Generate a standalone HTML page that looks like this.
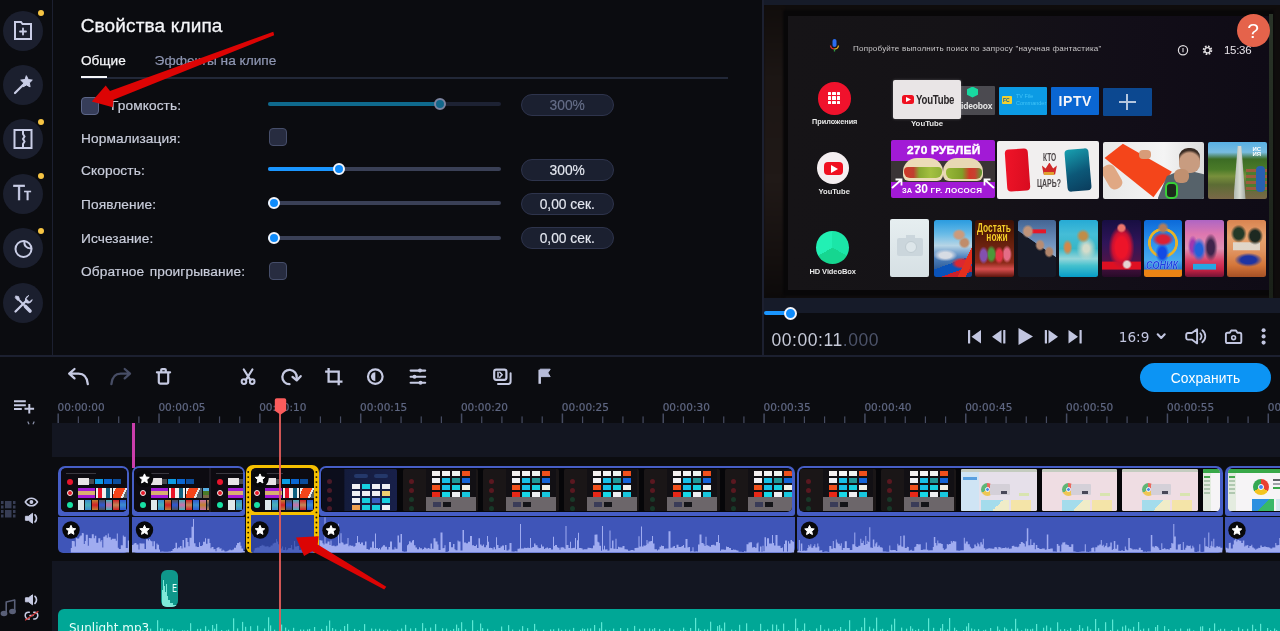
<!DOCTYPE html><html lang="ru"><head><meta charset="utf-8"><title>Свойства клипа</title><style>
*{margin:0;padding:0;box-sizing:border-box}
html,body{width:1280px;height:631px;overflow:hidden;background:#0b0c10;font-family:"Liberation Sans","DejaVu Sans",sans-serif;color:#d0d3e0}
.a{position:absolute}
#root{position:relative;width:1280px;height:631px;overflow:hidden;will-change:transform}
.circ{position:absolute;left:3px;width:40px;height:40px;border-radius:50%;background:#1b1f2e}
.dot{position:absolute;width:6px;height:6px;border-radius:50%;background:#f6c443}
.lbl{position:absolute;left:81px;font-size:13.7px;color:#c9cddb;white-space:nowrap;letter-spacing:.1px;word-spacing:1.500px;-webkit-text-stroke:.2px #c9cddb}
.cb{position:absolute;width:18px;height:18px;border-radius:4px;background:#272c40;border:1.5px solid #464e6a}
.track{position:absolute;left:268px;width:233px;height:4px;border-radius:2px;background:#3a4056}
.fill{position:absolute;left:268px;height:4px;border-radius:2px}
.knob{position:absolute;width:12px;height:12px;border-radius:50%;background:#0f8bfa;border:2px solid #f2f4fa}
.val{position:absolute;left:520.5px;width:93.5px;height:22.3px;border-radius:11.2px;background:#1b2030;border:1.5px solid #2e344c;font-size:13.8px;color:#e4e7f0;text-align:center;line-height:21.600px;-webkit-text-stroke:.15px currentColor}
.rl{position:absolute;top:401px;font-family:"DejaVu Sans","Liberation Sans",sans-serif;font-size:10.5px;color:#5f6782;white-space:nowrap;-webkit-text-stroke:.2px #5f6782}
.tvt{position:absolute;color:#e8e8e8;white-space:nowrap;font-family:"Liberation Sans",sans-serif}
</style></head><body><div id="root">
<div class="a" style="left:52px;top:0;width:1px;height:356px;background:#1c2030"></div>
<div class="circ" style="top:10.8px"></div>
<div class="circ" style="top:64.8px"></div>
<div class="circ" style="top:119px"></div>
<div class="circ" style="top:173.5px"></div>
<div class="circ" style="top:228.3px"></div>
<div class="circ" style="top:282.8px"></div>
<div class="dot" style="left:38px;top:10px"></div>
<div class="dot" style="left:38px;top:118.8px"></div>
<div class="dot" style="left:38px;top:173.2px"></div>
<div class="dot" style="left:38px;top:227.6px"></div>
<svg class="a" style="left:0;top:0" width="52" height="356" viewBox="0 0 52 356" fill="none" stroke="#c9cde6" stroke-width="2" stroke-linejoin="round" stroke-linecap="round">
<!-- folder plus -->
<path d="M15 39V22h6l1.5 2H31v15z" stroke-linejoin="miter"/>
<path d="M23 28.5v6M20 31.5h6" stroke-width="1.8"/>
<!-- wand -->
<path d="M15 93l8-8" stroke-width="2.2"/>
<path d="M26.5 76l1.8 3.6 4 .5-2.9 2.8.7 4-3.6-1.9-3.6 1.9.7-4-2.900-2.800 4-.5z" fill="#c9cde6" stroke-width="1"/>
<!-- transitions -->
<path d="M14.500 130h17v18h-17zM23 130v4l1.500 2.500-1.500 2.500 1.500 2.500-1.500 2.500V148" stroke-linejoin="miter"/>
<!-- sticker -->
<circle cx="23.500" cy="249" r="8"/>
<path d="M24.500 241.300c-.8 4.300 2.500 7.700 6.800 6.900" stroke-width="1.900"/>
<!-- tools -->
<path d="M17.500 298.500l7 7" stroke-width="1.800"/><path d="M25.500 306.500l4.500 4.500" stroke-width="3.600"/><path d="M16 296l2.600.6.700 2.400-1.600 1.300-2.300-2.200z" fill="#c9cde6" stroke-width=".8"/>
<path d="M15.500 311.500l10.800-10.800" stroke-width="2.300"/>
<path d="M28.300 295.800l-2.300 2.900 3.300 3.300 2.900-2.300a4.300 4.300 0 0 1-5.700 3.100a4.300 4.300 0 0 1 1.800-7z" fill="#c9cde6" stroke-width="1"/>
</svg>
<div class="a" style="left:12.500px;top:181.300px;font-size:21.5px;color:#c9cde6;letter-spacing:-1.200px;line-height:24px;-webkit-text-stroke:.45px #c9cde6;transform:scaleX(.92);transform-origin:0 50%">T<span style="font-size:17px;letter-spacing:0">т</span></div>
<div class="a" style="left:80.700px;top:14.100px;font-size:19px;color:#f4f5f8;white-space:nowrap;line-height:24px;letter-spacing:.15px;-webkit-text-stroke:.3px #f4f5f8">Свойства клипа</div>
<div class="a" style="left:81px;top:52.300px;font-size:13.6px;color:#f4f5f8;white-space:nowrap;line-height:18px;-webkit-text-stroke:.25px #f4f5f8">Общие</div>
<div class="a" style="left:154.600px;top:52.300px;font-size:13.7px;color:#8f97b3;white-space:nowrap;line-height:18px;-webkit-text-stroke:.2px #8f97b3">Эффекты на клипе</div>
<div class="a" style="left:81px;top:77px;width:647px;height:1.5px;background:#222838"></div>
<div class="a" style="left:81px;top:76px;width:26px;height:2px;background:#f4f5f8"></div>
<div class="lbl" style="left:111px;top:96.8px;line-height:18px">Громкость:</div>
<div class="lbl" style="left:81px;top:129.8px;line-height:18px">Нормализация:</div>
<div class="lbl" style="left:81px;top:161.8px;line-height:18px">Скорость:</div>
<div class="lbl" style="left:81px;top:195.8px;line-height:18px">Появление:</div>
<div class="lbl" style="left:81px;top:229.8px;line-height:18px">Исчезание:</div>
<div class="lbl" style="left:81px;top:262.8px;line-height:18px">Обратное проигрывание:</div>
<div class="cb" style="left:81px;top:96.500px;background:#363d59;border-color:#5d6789"></div>
<div class="cb" style="left:268.500px;top:128px"></div>
<div class="cb" style="left:268.500px;top:261.500px"></div>
<div class="track" style="top:102.3px;background:#1d2233"></div>
<div class="fill" style="top:102.3px;width:171.60000000000002px;background:#0f6a8d"></div>
<div class="knob" style="left:433.6px;top:98.3px;background:#12678a;border-color:#7b84a0"></div>
<div class="track" style="top:167px;background:#3a4056"></div>
<div class="fill" style="top:167px;width:70.80000000000001px;background:#1a96ff"></div>
<div class="knob" style="left:332.8px;top:163px"></div>
<div class="track" style="top:201px;background:#3a4056"></div>
<div class="fill" style="top:201px;width:6px;background:#1a96ff"></div>
<div class="knob" style="left:268px;top:197px"></div>
<div class="track" style="top:236px;background:#3a4056"></div>
<div class="fill" style="top:236px;width:6px;background:#1a96ff"></div>
<div class="knob" style="left:268px;top:232px"></div>
<div class="val" style="top:94px;color:#666e88;">300%</div>
<div class="val" style="top:159px;">300%</div>
<div class="val" style="top:193px;">0,00 сек.</div>
<div class="val" style="top:227px;">0,00 сек.</div>
<div class="a" style="left:0;top:355px;width:1280px;height:1.5px;background:#1c2030"></div>
<div class="a" style="left:762px;top:0;width:1.5px;height:356px;background:#1c2030"></div>
<div class="a" style="left:764px;top:0;width:516px;height:313px;background:#161b29"></div>
<div class="a" id="photo" style="left:764px;top:5px;width:516px;height:293px;background:#0f0c0c;overflow:hidden"><div class="a" style="left:0;top:0;width:21px;height:293px;background:linear-gradient(180deg,#110d0c 0,#1c1614 25%,#201917 60%,#15100f 85%,#0c0a0a 100%);filter:blur(1px)"></div>
<div class="a" style="left:18.5px;top:5.0px;width:491.0px;height:286.0px;background:#080708;border-radius:2px;filter:blur(1.2px)"></div>
<div class="a" style="left:23.5px;top:11.0px;width:481.5px;height:273.5px;background:linear-gradient(90deg,#161417 0%,#151317 35%,#120e18 70%,#0f0b16 100%);filter:blur(.7px)"></div>
<div class="a" style="left:505.0px;top:9.0px;width:4.0px;height:285.0px;background:linear-gradient(180deg,#2a3428,#1a2018);filter:blur(.7px)"></div>
<svg class="a" style="left:65px;top:33px;filter:blur(.4px)" width="11" height="16" viewBox="0 0 11 16"><rect x="3.5" y="1" width="4" height="8" rx="2" fill="#2a6cf0"/><path d="M1.5 7.500a4 4 0 0 0 4 3.500" stroke="#e03030" stroke-width="1.300" fill="none"/><path d="M9.500 7.500a4 4 0 0 1-4 3.500" stroke="#e8b020" stroke-width="1.300" fill="none"/><path d="M5.500 11v2.500" stroke="#30a040" stroke-width="1.300"/></svg>
<div class="tvt" style="left:89px;top:38px;font-size:8.05px;line-height:11px;color:#c8c6c8;filter:blur(.3px);letter-spacing:.19px">Попробуйте выполнить поиск по запросу "научная фантастика"</div>
<svg class="a" style="left:412px;top:38px" width="40" height="14" viewBox="0 0 40 14" fill="none" stroke="#e0dde0" stroke-width="1.200"><circle cx="7" cy="7.200" r="4.600"/><path d="M7 5v4.200" stroke-width="1.100"/><circle cx="31.500" cy="7.200" r="3.800" stroke-width="2" stroke-dasharray="1.700 1.280"/><circle cx="31.500" cy="7.200" r="2.600" stroke-width="1.300"/></svg>
<div class="tvt" style="left:460px;top:38px;font-size:11.5px;line-height:15px;color:#e6e2e8;letter-spacing:-.3px">15:36</div>
<div class="a" style="left:54.0px;top:77.0px;width:32.5px;height:32.5px;border-radius:50%;background:#f0122c"></div>
<div class="a" style="left:63.8px;top:86.8px;width:3.4px;height:3.4px;background:#fff;border-radius:.5px"></div>
<div class="a" style="left:63.8px;top:91.4px;width:3.4px;height:3.4px;background:#fff;border-radius:.5px"></div>
<div class="a" style="left:63.8px;top:96.0px;width:3.4px;height:3.4px;background:#fff;border-radius:.5px"></div>
<div class="a" style="left:68.4px;top:86.8px;width:3.4px;height:3.4px;background:#fff;border-radius:.5px"></div>
<div class="a" style="left:68.4px;top:91.4px;width:3.4px;height:3.4px;background:#fff;border-radius:.5px"></div>
<div class="a" style="left:68.4px;top:96.0px;width:3.4px;height:3.4px;background:#fff;border-radius:.5px"></div>
<div class="a" style="left:73.0px;top:86.8px;width:3.4px;height:3.4px;background:#fff;border-radius:.5px"></div>
<div class="a" style="left:73.0px;top:91.4px;width:3.4px;height:3.4px;background:#fff;border-radius:.5px"></div>
<div class="a" style="left:73.0px;top:96.0px;width:3.4px;height:3.4px;background:#fff;border-radius:.5px"></div>
<div class="tvt" style="left:48px;top:112px;font-size:7.3px;line-height:10px;font-weight:bold;filter:blur(.3px)">Приложения</div>
<div class="a" style="left:53.2px;top:147.0px;width:32.0px;height:32.0px;border-radius:50%;background:#f4eef0"></div>
<div class="a" style="left:60.0px;top:156.5px;width:18.5px;height:13.0px;border-radius:4px;background:#f01020"></div>
<svg class="a" style="left:66.5px;top:159.5px" width="7" height="8" viewBox="0 0 7 8"><path d="M0 0l7 4-7 4z" fill="#fff"/></svg>
<div class="tvt" style="left:54.5px;top:182px;font-size:7.6px;line-height:10px;font-weight:bold;filter:blur(.3px)">YouTube</div>
<div class="a" style="left:51.5px;top:226.0px;width:33.0px;height:33.0px;border-radius:50%;background:conic-gradient(from 0deg,#1be6a8 0 120deg,#16d690 120deg 240deg,#22f0b4 240deg 360deg)"></div>
<div class="tvt" style="left:45.5px;top:261.5px;font-size:7.5px;line-height:10px;font-weight:bold;filter:blur(.3px);letter-spacing:-.1px">HD VideoBox</div>
<div class="a" style="left:196.0px;top:81.0px;width:35.0px;height:28.5px;background:#4b4a50;border-radius:1px"></div>
<div class="a" style="left:203.0px;top:81.5px;width:11.0px;height:11.0px;background:#18d8a0;clip-path:polygon(50% 0,100% 25%,100% 75%,50% 100%,0 75%,0 25%)"></div>
<div class="tvt" style="left:197px;top:95.5px;font-size:8.5px;line-height:11px;font-weight:bold;filter:blur(.3px);letter-spacing:-.2px">ideobox</div>
<div class="a" style="left:128.5px;top:75.0px;width:68.0px;height:38.5px;background:#e9e5e6;border-radius:2px;box-shadow:0 0 3px rgba(255,255,255,.25)"></div>
<div class="a" style="left:138.0px;top:90.0px;width:12.0px;height:8.5px;background:#f01020;border-radius:2.500px"></div>
<svg class="a" style="left:142px;top:92px" width="5" height="5" viewBox="0 0 5 5"><path d="M0 0l5 2.500-5 2.500z" fill="#fff"/></svg>
<div class="tvt" style="left:152px;top:86.5px;font-size:13px;line-height:15px;font-weight:bold;color:#2a2628;transform:scaleX(.74);transform-origin:0 50%;letter-spacing:-.3px;filter:blur(.3px)">YouTube</div>
<div class="tvt" style="left:147px;top:114px;font-size:7.8px;line-height:10px;font-weight:bold;filter:blur(.3px)">YouTube</div>
<div class="a" style="left:234.5px;top:81.5px;width:48.5px;height:28.0px;background:#0c9be4;border-radius:1px"></div>
<div class="a" style="left:237.5px;top:90.5px;width:10.0px;height:8.5px;background:#f0d030;border-radius:1px"></div>
<div class="tvt" style="left:252px;top:88px;font-size:5.5px;line-height:6.5px;color:#40c4f8;filter:blur(.3px)">TV File<br>Commander</div>
<div class="tvt" style="left:239px;top:92px;font-size:5px;line-height:6px;color:#1060a0;font-weight:bold">FC</div>
<div class="a" style="left:286.5px;top:82.0px;width:48.5px;height:27.5px;background:#0a66d2;border-radius:1px"></div>
<div class="tvt" style="left:294.5px;top:87.5px;font-size:14px;line-height:17px;font-weight:bold;color:#f4f4f8;letter-spacing:.6px;filter:blur(.3px)">IPTV</div>
<div class="a" style="left:339.0px;top:83.0px;width:49.0px;height:27.5px;background:#0c4890;border-radius:1px"></div>
<div class="a" style="left:355.0px;top:96.0px;width:16.5px;height:1.7px;background:#b4c6de"></div>
<div class="a" style="left:362.4px;top:88.5px;width:1.7px;height:16.5px;background:#b4c6de"></div>
<div class="a" style="left:127.0px;top:135.0px;width:103.5px;height:57.5px;background:#a21ad6;border-radius:2px;overflow:hidden"><div class="a" style="left:0;top:21px;width:104px;height:21px;background:#3a3436"></div><div class="a" style="left:12px;top:18px;width:40px;height:23px;border-radius:14px 14px 6px 6px;background:#ecdcb8"></div><div class="a" style="left:52px;top:18px;width:40px;height:23px;border-radius:14px 14px 6px 6px;background:#e8d8b4"></div><div class="a" style="left:13px;top:27px;width:38px;height:11px;border-radius:4px 4px 6px 6px;background:linear-gradient(90deg,#d03828,#c04030 25%,#88a830 40%,#a4c040 70%,#90b038)"></div><div class="a" style="left:55px;top:28px;width:36px;height:11px;border-radius:4px 4px 6px 6px;background:linear-gradient(90deg,#98b838,#80a028 45%,#d03828 65%,#c84030 80%,#58a030)"></div><div class="tvt" style="left:15.500px;top:3px;font-size:11px;line-height:14px;font-weight:bold;color:#fff;letter-spacing:.2px;transform:scaleX(1.080);transform-origin:0 50%;-webkit-text-stroke:.4px #fff">270 РУБЛЕЙ</div><div class="tvt" style="left:11px;top:42px;font-size:9px;line-height:14px;font-weight:bold;color:#fff"><span style="font-size:7.500px">ЗА</span> <span style="font-size:12px">30</span> <span style="font-size:8px;letter-spacing:.35px">ГР. ЛОСОСЯ</span></div><svg class="a" style="left:0;top:36px" width="104" height="14" viewBox="0 0 104 14" fill="none" stroke="#fff" stroke-width="1.800"><path d="M1 12l9-8M4.500 3.500h6v6M103 12l-9-8M99.500 3.500h-6v6"/></svg></div>
<div class="a" style="left:233.4px;top:136.0px;width:101.5px;height:57.5px;background:#f1efef;border-radius:2px;overflow:hidden"><div class="a" style="left:9px;top:7.500px;width:22.500px;height:41.500px;border-radius:4px;background:linear-gradient(100deg,#f01428,#d80c20);transform:rotate(-4deg)"></div><div class="a" style="left:68.500px;top:8px;width:24px;height:41.500px;border-radius:4px;background:linear-gradient(160deg,#18a0b0,#0c5878 55%,#0a3c5c);transform:rotate(-5deg)"></div><div class="tvt" style="left:45.200px;top:9.500px;font-size:11px;line-height:12px;font-weight:bold;color:#4c4648;transform:scaleX(.6);transform-origin:0 50%">КТО</div><div class="tvt" style="left:39.500px;top:36px;font-size:11px;line-height:12px;font-weight:bold;color:#4c4648;transform:scaleX(.63);transform-origin:0 50%">ЦАРЬ?</div><div class="a" style="left:44.500px;top:21.500px;width:15px;height:12px;background:#d02828;clip-path:polygon(0 25%,25% 50%,50% 0,75% 50%,100% 25%,88% 100%,12% 100%)"></div><div class="a" style="left:47px;top:31px;width:10px;height:2.500px;background:#e0a030"></div></div>
<div class="a" style="left:338.5px;top:137.0px;width:101.5px;height:57.0px;background:linear-gradient(90deg,#e8e8e8,#f4f4f4 60%,#dcdcdc);border-radius:2px;overflow:hidden"><div class="a" style="left:0;top:0;width:102px;height:57px;background:#f4451a;clip-path:polygon(2% 28%,20% 3%,68% 52%,50% 97%)"></div><div class="a" style="left:2px;top:22px;width:14px;height:26px;border-radius:6px;background:#e0a884;transform:rotate(-30deg)"></div><div class="a" style="left:36px;top:8px;width:12px;height:9px;border-radius:4px;background:#d89c78"></div><div class="a" style="left:55px;top:24px;width:47px;height:33px;background:#56626a;clip-path:polygon(20% 30%,55% 10%,100% 25%,100% 100%,0 100%)"></div><div class="a" style="left:76px;top:6px;width:21px;height:25px;border-radius:9px;background:radial-gradient(circle at 50% 60%,#c89c80 0 55%,#3a2c24 70%)"></div><div class="a" style="left:71px;top:27px;width:15px;height:14px;border-radius:6px;background:#c09070"></div><div class="a" style="left:62px;top:40px;width:13px;height:17px;border-radius:5px;background:#1c2a1c;border:2px solid #38d038"></div></div>
<div class="a" style="left:443.5px;top:137.0px;width:59.5px;height:57.0px;background:linear-gradient(180deg,#58b0e4 0,#78bce0 18%,#3c6c24 30%,#4a7a28 48%,#78903c 60%,#5c6c34 75%,#7a6848 100%);border-radius:2px;overflow:hidden"><div class="a" style="left:26px;top:4px;width:12px;height:53px;background:linear-gradient(90deg,#b0b8b0,#d8dcd4,#9ca49c);clip-path:polygon(35% 0,65% 0,100% 100%,0 100%)"></div><div class="a" style="left:38px;top:27px;width:22px;height:22px;background:repeating-linear-gradient(180deg,#9c5c3c 0 3px,#4c7c30 3px 6px)"></div><div class="a" style="left:45px;top:5px;width:15px;height:10px;color:#fff;font-size:6px;line-height:5px;font-weight:bold">ИС<br>ИЯ</div><div class="a" style="left:48px;top:24px;width:9px;height:26px;border-radius:4px;background:#2860b0"></div></div>
<div class="a" style="left:126.2px;top:214.2px;width:39.2px;height:58.0px;background:linear-gradient(180deg,#e6eef0,#d6e0e4);border-radius:2px;overflow:hidden"><div class="a" style="left:7px;top:19px;width:26px;height:18px;border-radius:2px;background:#cbd6dc"></div><div class="a" style="left:15px;top:22px;width:12px;height:12px;border-radius:50%;background:#dde6ea;border:1.500px solid #c0ccd2"></div><div class="a" style="left:16px;top:16px;width:9px;height:4px;background:#cbd6dc"></div></div>
<div class="a" style="left:169.5px;top:215.0px;width:38.5px;height:56.5px;background:radial-gradient(ellipse 7px 6px at 66% 26%,#d4a88c 60%,transparent 100%),radial-gradient(ellipse 6px 6px at 80% 40%,#c89878 60%,transparent 100%),linear-gradient(115deg,transparent 0 78%,#e03828 78% 90%,transparent 90%),radial-gradient(ellipse 12px 6px at 30% 62%,#e8ecf4 50%,transparent 100%),radial-gradient(ellipse 11px 6px at 74% 76%,#d83038 55%,transparent 100%),linear-gradient(160deg,transparent 0 70%,#1458b8 70% 84%,#c82830 84% 92%,#20488c 92%),linear-gradient(180deg,#3aa4e4 0,#7cc8f0 25%,#c8e4f4 45%,#5c8cc4 65%,#204880 100%);border-radius:2.500px;filter:blur(.5px) saturate(1.150) brightness(.93)"></div>
<div class="a" style="left:211.3px;top:215.0px;width:38.5px;height:56.5px;background:radial-gradient(ellipse 5px 9px at 22% 62%,#8858b0 60%,transparent 100%),radial-gradient(ellipse 5px 9px at 42% 60%,#58a048 60%,transparent 100%),radial-gradient(ellipse 5px 9px at 62% 62%,#e04050 60%,transparent 100%),radial-gradient(ellipse 5px 9px at 82% 60%,#e87890 60%,transparent 100%),linear-gradient(180deg,#3c1408 0,#5c200c 30%,#702818 50%,#8c3020 75%,#d85858 86%,#5c1810 100%);border-radius:2.500px;filter:blur(.5px) saturate(1.150) brightness(.93)"></div>
<div class="a" style="left:253.6px;top:215.0px;width:38.5px;height:56.5px;background:radial-gradient(ellipse 6px 7px at 26% 20%,#c8a088 60%,transparent 100%),radial-gradient(ellipse 5px 6px at 58% 44%,#c09880 60%,transparent 100%),radial-gradient(ellipse 5px 6px at 82% 56%,#b89078 60%,transparent 100%),linear-gradient(180deg,transparent 0 16%,#e02030 17% 23%,transparent 24%) 55% 0/45% 100% no-repeat,linear-gradient(35deg,#181c28 0 55%,transparent 56%),linear-gradient(180deg,#4c6c98 0,#7c9cc4 40%,#a8bcd4 70%,#404858 100%);border-radius:2.500px;filter:blur(.5px) saturate(1.150) brightness(.93)"></div>
<div class="a" style="left:295.4px;top:215.0px;width:38.5px;height:56.5px;background:radial-gradient(ellipse 7px 7px at 62% 28%,#c89858 50%,transparent 100%),radial-gradient(ellipse 5px 8px at 22% 48%,#d8945c 50%,transparent 100%),radial-gradient(ellipse 10px 12px at 70% 50%,#e4ecdc 30%,transparent 100%),linear-gradient(180deg,#38b4dc 0,#58c8e0 25%,#48c0d0 50%,#a8e4e8 68%,#58ccd8 80%,#18a4cc 100%);border-radius:2.500px;filter:blur(.5px) saturate(1.150) brightness(.93)"></div>
<div class="a" style="left:338.0px;top:215.0px;width:38.5px;height:56.5px;background:radial-gradient(ellipse 5px 5px at 50% 14%,#f08078 60%,transparent 100%),radial-gradient(ellipse 5px 5px at 64% 78%,#f4e4e4 60%,transparent 100%),radial-gradient(ellipse 13px 22px at 50% 48%,#e81c30 45%,#c01838 70%,transparent 100%),linear-gradient(180deg,transparent 0 72%,#d81828 74% 86%,transparent 88%),linear-gradient(180deg,#181040 0,#301858 40%,#501848 75%,#280c28 100%);border-radius:2.500px;filter:blur(.5px) saturate(1.150) brightness(.93)"></div>
<div class="a" style="left:379.9px;top:215.0px;width:38.5px;height:56.5px;background:radial-gradient(ellipse 6px 6px at 50% 14%,#b88868 50%,transparent 100%),radial-gradient(ellipse 11px 7px at 50% 34%,#d8283c 55%,transparent 100%),radial-gradient(ellipse 7px 10px at 48% 58%,#1c50e0 55%,transparent 100%),linear-gradient(180deg,transparent 0 86%,#f09028 88% 100%),radial-gradient(circle 17px at 50% 40%,transparent 70%,#f0c040 74% 86%,transparent 90%),linear-gradient(180deg,#1870d8 0,#3c9cf0 40%,#58b4f4 70%,#1858c0 100%);border-radius:2.500px;filter:blur(.5px) saturate(1.150) brightness(.93)"></div>
<div class="a" style="left:421.4px;top:215.0px;width:38.5px;height:56.5px;background:radial-gradient(ellipse 7px 12px at 36% 52%,#2c68d8 50%,transparent 100%),radial-gradient(ellipse 5px 11px at 20% 46%,#a040b0 50%,transparent 100%),radial-gradient(ellipse 7px 14px at 66% 48%,#40284c 50%,transparent 100%),linear-gradient(180deg,transparent 0 76%,#38b0e8 78% 86%,transparent 88%) 50% 0/60% 100% no-repeat,linear-gradient(180deg,#b470c8 0,#e484b8 25%,#e8a0c0 50%,#d8486c 72%,#c02848 88%,#701838 100%);border-radius:2.500px;filter:blur(.5px) saturate(1.150) brightness(.93)"></div>
<div class="a" style="left:463.2px;top:215.0px;width:38.5px;height:56.5px;background:radial-gradient(ellipse 8px 9px at 30% 24%,#283c2c 60%,transparent 100%),radial-gradient(ellipse 8px 9px at 72% 28%,#202c24 60%,transparent 100%),linear-gradient(180deg,transparent 0 38%,rgba(240,236,228,.9) 40% 52%,transparent 54%) 50% 0/70% 100% no-repeat,radial-gradient(ellipse 14px 7px at 55% 70%,#2438a0 55%,transparent 100%),linear-gradient(180deg,#e09060 0,#f0b080 30%,#e8a070 55%,#d88048 80%,#a85830 100%);border-radius:2.500px;filter:blur(.5px) saturate(1.150) brightness(.93)"></div>
<div class="tvt" style="left:213.29999999999995px;top:218.5px;font-size:12px;line-height:9.500px;font-weight:bold;color:#f4cc28;transform:scaleX(.7);transform-origin:0 0;filter:blur(.3px);text-shadow:0 0 1px #401000">Достать<br>&nbsp;&nbsp;&nbsp;&nbsp;ножи</div>
<div class="tvt" style="left:382px;top:254.5px;font-size:10.5px;line-height:10px;font-weight:bold;font-style:italic;color:#1c40e0;transform:scaleX(.86);transform-origin:0 0;filter:blur(.3px);text-shadow:0 0 1px #fff">СОНИК</div>
</div>
<div class="a" style="left:1236.500px;top:14px;width:33px;height:33px;border-radius:50%;background:#e5634b;color:#fff;font-size:21px;line-height:33px;text-align:center">?</div>
<div class="a" style="left:764px;top:311px;width:26px;height:4px;border-radius:2px;background:#1a96ff"></div>
<div class="knob" style="left:783.500px;top:306.500px;width:13px;height:13px"></div>
<div class="a" style="left:771.500px;top:329px;font-size:17.5px;line-height:22px;color:#c6cad8;white-space:nowrap;letter-spacing:.55px">00:00:11<span style="color:#4c5369">.000</span></div>
<svg class="a" style="left:960px;top:320px" width="320" height="34" viewBox="960 320 320 34" fill="#c2c6e0" stroke="none"><rect x="968" y="330" width="2.200" height="13.500" rx=".5"/><path d="M981 330v13.500l-9.500-6.750z"/><path d="M1001.500 330v13.500l-9.500-6.750z"/><rect x="1003.200" y="330" width="2.200" height="13.500" rx=".5"/><path d="M1018.500 328v17l14.500-8.500z"/><rect x="1044.800" y="330" width="2.200" height="13.500" rx=".5"/><path d="M1048.500 330v13.500l9.500-6.750z"/><path d="M1068.500 330v13.500l9.500-6.750z"/><rect x="1079.500" y="330" width="2.200" height="13.500" rx=".5"/><path d="M1157.700 334.300l3.500 3.700 3.500-3.700" fill="none" stroke="#c2c6e0" stroke-width="2.100" stroke-linecap="round" stroke-linejoin="round"/><path d="M1188 333h3.800l5.300-3.800v14.200l-5.300-3.800h-3.800a1.800 1.800 0 0 1-1.800-1.800v-3a1.800 1.800 0 0 1 1.800-1.800z" fill="none" stroke="#c2c6e0" stroke-width="1.900" stroke-linejoin="round"/><path d="M1200.300 333.300a4.200 4.200 0 0 1 0 6M1202.300 330.300a7.500 7.500 0 0 1 0 12" fill="none" stroke="#c2c6e0" stroke-width="1.800" stroke-linecap="round"/><path d="M1227.500 332.800h2.300l1.400-2.300h4.800l1.400 2.300h2.300a1.600 1.600 0 0 1 1.600 1.600v7a1.600 1.600 0 0 1-1.600 1.600h-12.200a1.600 1.600 0 0 1-1.600-1.600v-7a1.600 1.600 0 0 1 1.600-1.600z" fill="none" stroke="#c2c6e0" stroke-width="1.900" stroke-linejoin="round"/><circle cx="1233.600" cy="337.700" r="1.900" fill="none" stroke="#c2c6e0" stroke-width="1.600"/><circle cx="1263.600" cy="330.200" r="2.050"/><circle cx="1263.600" cy="336.400" r="2.050"/><circle cx="1263.600" cy="342.600" r="2.050"/></svg>
<div class="a" style="left:1118.800px;top:326.300px;font-family:'DejaVu Sans',sans-serif;font-size:13.6px;line-height:22px;color:#c2c6e0;white-space:nowrap">16:9</div>
<svg class="a" style="left:60px;top:360px" width="520" height="34" viewBox="60 360 520 34" fill="none" stroke="#c6cae2" stroke-width="2.300" stroke-linecap="round" stroke-linejoin="round"><path d="M74.500 369l-5.300 4.700 5.300 4.700M70 373.700h8.500c5.500 0 8.600 3.500 9.300 10.400"/><path d="M124.700 369l5.300 4.700-5.300 4.700M129.200 373.700h-8.500c-5.500 0-8.600 3.500-9.300 10.400" stroke="#474d65"/><path d="M156.900 372.300h13.200M161.200 372v-1.900a1 1 0 0 1 1-1h2.600a1 1 0 0 1 1 1v1.900M158.800 372.800v9.300a1.600 1.600 0 0 0 1.600 1.600h6.200a1.600 1.600 0 0 0 1.600-1.600v-9.300" stroke-width="2.200"/><circle cx="244" cy="381.600" r="2.350" stroke-width="2"/><circle cx="252.200" cy="381.600" r="2.350" stroke-width="2"/><path d="M243.800 369.500l6.800 10.800M252.400 369.500l-6.800 10.800" stroke-width="2.200"/><path d="M289.500 384.200A7.200 7.200 0 1 1 296.700 377.800"/><path d="M292.500 376.900l4.200 3.500 4-4.200"/><path d="M328.600 368v13.700h13.900M325.100 371.700h13.600v13.600" stroke-linejoin="miter" stroke-linecap="butt"/><circle cx="375.300" cy="376.600" r="7.300" stroke-width="2.200"/><path d="M375.300 372.200a4.400 4.400 0 0 0 0 8.800z" fill="#c6cae2" stroke="none"/><path d="M410.600 370.600h14.600M410.600 376.700h14.600M410.600 382.800h14.600" stroke-width="2.100"/><circle cx="420" cy="370.600" r="2" fill="#c6cae2" stroke="none"/><circle cx="414.500" cy="376.700" r="2" fill="#c6cae2" stroke="none"/><circle cx="420.500" cy="382.800" r="2" fill="#c6cae2" stroke="none"/><rect x="494.200" y="369.700" width="12.200" height="10.100" rx="2" stroke-width="2.200"/><path d="M499.800 372.300l2.400 2.500-2.400 2.500M498 372.300v5" stroke-width="1.600"/><path d="M498 384h10.200a2.400 2.400 0 0 0 2.400-2.400v-8.300" stroke-width="2"/><path d="M539.700 369.800v14" stroke-width="2.500" stroke-linecap="butt"/><path d="M540.500 369.200h9.700l-2.400 3.700 2.400 3.700h-9.700z" fill="#b6bbd8" stroke="#b6bbd8" stroke-width="1"/></svg>
<div class="a" style="left:1140px;top:363px;width:131px;height:29px;border-radius:14.5px;background:#0c94f4;color:#fff;font-size:13.8px;line-height:31px;text-align:center;letter-spacing:.1px">Сохранить</div>
<svg class="a" style="left:12px;top:396px" width="28" height="20" viewBox="12 396 28 20" fill="none" stroke="#c6cae2" stroke-width="2"><path d="M14 401.300h11.800M14 405.200h11.800M14 409.100h7.800M29.300 404v9.600M24.500 408.800h9.600"/></svg>
<svg class="a" style="left:0;top:396px" width="1280" height="28" viewBox="0 396 1280 28" fill="#464c62"><rect x="57.45" y="413.500" width="1.500" height="9.500"/><rect x="77.77" y="416.400" width="1.200" height="6.600"/><rect x="97.94" y="416.400" width="1.200" height="6.600"/><rect x="118.10" y="416.400" width="1.200" height="6.600"/><rect x="138.27" y="416.400" width="1.200" height="6.600"/><rect x="158.29" y="413.500" width="1.500" height="9.500"/><rect x="178.61" y="416.400" width="1.200" height="6.600"/><rect x="198.78" y="416.400" width="1.200" height="6.600"/><rect x="218.94" y="416.400" width="1.200" height="6.600"/><rect x="239.11" y="416.400" width="1.200" height="6.600"/><rect x="259.13" y="413.500" width="1.500" height="9.500"/><rect x="279.45" y="416.400" width="1.200" height="6.600"/><rect x="299.62" y="416.400" width="1.200" height="6.600"/><rect x="319.78" y="416.400" width="1.200" height="6.600"/><rect x="339.95" y="416.400" width="1.200" height="6.600"/><rect x="359.97" y="413.500" width="1.500" height="9.500"/><rect x="380.29" y="416.400" width="1.200" height="6.600"/><rect x="400.46" y="416.400" width="1.200" height="6.600"/><rect x="420.62" y="416.400" width="1.200" height="6.600"/><rect x="440.79" y="416.400" width="1.200" height="6.600"/><rect x="460.81" y="413.500" width="1.500" height="9.500"/><rect x="481.13" y="416.400" width="1.200" height="6.600"/><rect x="501.30" y="416.400" width="1.200" height="6.600"/><rect x="521.46" y="416.400" width="1.200" height="6.600"/><rect x="541.63" y="416.400" width="1.200" height="6.600"/><rect x="561.65" y="413.500" width="1.500" height="9.500"/><rect x="581.97" y="416.400" width="1.200" height="6.600"/><rect x="602.14" y="416.400" width="1.200" height="6.600"/><rect x="622.30" y="416.400" width="1.200" height="6.600"/><rect x="642.47" y="416.400" width="1.200" height="6.600"/><rect x="662.49" y="413.500" width="1.500" height="9.500"/><rect x="682.81" y="416.400" width="1.200" height="6.600"/><rect x="702.98" y="416.400" width="1.200" height="6.600"/><rect x="723.14" y="416.400" width="1.200" height="6.600"/><rect x="743.31" y="416.400" width="1.200" height="6.600"/><rect x="763.33" y="413.500" width="1.500" height="9.500"/><rect x="783.65" y="416.400" width="1.200" height="6.600"/><rect x="803.82" y="416.400" width="1.200" height="6.600"/><rect x="823.98" y="416.400" width="1.200" height="6.600"/><rect x="844.15" y="416.400" width="1.200" height="6.600"/><rect x="864.17" y="413.500" width="1.500" height="9.500"/><rect x="884.49" y="416.400" width="1.200" height="6.600"/><rect x="904.66" y="416.400" width="1.200" height="6.600"/><rect x="924.82" y="416.400" width="1.200" height="6.600"/><rect x="944.99" y="416.400" width="1.200" height="6.600"/><rect x="965.01" y="413.500" width="1.500" height="9.500"/><rect x="985.33" y="416.400" width="1.200" height="6.600"/><rect x="1005.50" y="416.400" width="1.200" height="6.600"/><rect x="1025.66" y="416.400" width="1.200" height="6.600"/><rect x="1045.83" y="416.400" width="1.200" height="6.600"/><rect x="1065.85" y="413.500" width="1.500" height="9.500"/><rect x="1086.17" y="416.400" width="1.200" height="6.600"/><rect x="1106.34" y="416.400" width="1.200" height="6.600"/><rect x="1126.50" y="416.400" width="1.200" height="6.600"/><rect x="1146.67" y="416.400" width="1.200" height="6.600"/><rect x="1166.69" y="413.500" width="1.500" height="9.500"/><rect x="1187.01" y="416.400" width="1.200" height="6.600"/><rect x="1207.18" y="416.400" width="1.200" height="6.600"/><rect x="1227.34" y="416.400" width="1.200" height="6.600"/><rect x="1247.51" y="416.400" width="1.200" height="6.600"/><rect x="1267.53" y="413.500" width="1.500" height="9.500"/></svg>
<div class="rl" style="left:57.5px">00:00:00</div>
<div class="rl" style="left:158.4px">00:00:05</div>
<div class="rl" style="left:259.2px">00:00:10</div>
<div class="rl" style="left:360.1px">00:00:15</div>
<div class="rl" style="left:460.9px">00:00:20</div>
<div class="rl" style="left:561.8px">00:00:25</div>
<div class="rl" style="left:662.7px">00:00:30</div>
<div class="rl" style="left:763.5px">00:00:35</div>
<div class="rl" style="left:864.4px">00:00:40</div>
<div class="rl" style="left:965.2px">00:00:45</div>
<div class="rl" style="left:1066.1px">00:00:50</div>
<div class="rl" style="left:1167.0px">00:00:55</div>
<div class="rl" style="left:1267.8px">00:01:00</div>
<div class="a" style="left:52px;top:423px;width:1228px;height:33.700px;background:#131621"></div>
<div class="a" style="left:52px;top:561px;width:1228px;height:70px;background:#131621"></div>
<div class="a" style="left:132.400px;top:423px;width:2.400px;height:45px;background:#cb3eac"></div>
<div class="a" style="left:58.3px;top:465.600px;width:71.2px;height:50px;border-radius:7px 7px 3px 3px;background:#465ec6"></div>
<div class="a" style="left:58.3px;top:516.900px;width:71.2px;height:35.900px;border-radius:0 0 5px 5px;background:#3f55b8"></div>
<div class="a" style="left:60.6px;top:468.3px;width:66.6px;height:44px;border-radius:5px;background:#0d0b11;overflow:hidden;filter:blur(.35px)"><div class="a" style="left:0;top:0"><div class="a" style="left:0;top:1.200px;width:76px;height:44px;background:#0d0b11"><div class="a" style="left:5px;top:4px;width:30px;height:1px;background:#3a3840"></div><div class="a" style="left:6px;top:9.500px;width:6px;height:6px;border-radius:50%;background:#e8142c"></div><div class="a" style="left:17px;top:9px;width:11px;height:7px;background:#e8e4e6"></div><div class="a" style="left:28px;top:10px;width:5px;height:5px;background:#4a4a50"></div><div class="a" style="left:34px;top:10px;width:8px;height:5px;background:#0c9be4"></div><div class="a" style="left:43px;top:10px;width:8px;height:5px;background:#0a66d2"></div><div class="a" style="left:52px;top:10px;width:8px;height:5px;background:#0c4d9c"></div><div class="a" style="left:6px;top:20.500px;width:6px;height:6px;border-radius:50%;background:#f0e8ea;border:1.500px solid #f0e8ea;background:#e81828"></div><div class="a" style="left:17px;top:19px;width:17px;height:9.500px;background:linear-gradient(180deg,#a21ad6 0 30%,#d8b070 30% 70%,#a21ad6 70%)"></div><div class="a" style="left:35px;top:19px;width:16.500px;height:9.500px;background:linear-gradient(90deg,#f0eeee 0 12%,#e81428 12% 35%,#f0eeee 35% 65%,#106080 65% 88%,#f0eeee 88%)"></div><div class="a" style="left:52px;top:19px;width:16.500px;height:9.500px;background:linear-gradient(115deg,#f0f0f0 0 15%,#f4451a 15% 60%,#e8e8e8 60% 70%,#56626a 70%)"></div><div class="a" style="left:69.500px;top:19px;width:7px;height:9.500px;background:linear-gradient(180deg,#58b0e4 0 25%,#4a7a28 25% 70%,#7a6848 70%)"></div><div class="a" style="left:6px;top:32.500px;width:6px;height:6px;border-radius:50%;background:#18e0a4"></div><div class="a" style="left:17px;top:31px;width:6.500px;height:10px;background:#dfe8ec"></div><div class="a" style="left:24.5px;top:31px;width:6.200px;height:10px;background:linear-gradient(180deg,#3c8cd0,#48b0b8 50%,#3c8cd0)"></div><div class="a" style="left:31.5px;top:31px;width:6.200px;height:10px;background:linear-gradient(180deg,#c08030,#d02028 50%,#c08030)"></div><div class="a" style="left:38.5px;top:31px;width:6.200px;height:10px;background:linear-gradient(180deg,#4c505c,#3058d0 50%,#4c505c)"></div><div class="a" style="left:45.5px;top:31px;width:6.200px;height:10px;background:linear-gradient(180deg,#48b0b8,#c870a8 50%,#48b0b8)"></div><div class="a" style="left:52.5px;top:31px;width:6.200px;height:10px;background:linear-gradient(180deg,#d02028,#c08858 50%,#d02028)"></div><div class="a" style="left:59.5px;top:31px;width:6.200px;height:10px;background:linear-gradient(180deg,#3058d0,#3c8cd0 50%,#3058d0)"></div><div class="a" style="left:66.5px;top:31px;width:6.200px;height:10px;background:linear-gradient(180deg,#c870a8,#c08030 50%,#c870a8)"></div><div class="a" style="left:73.5px;top:31px;width:6.200px;height:10px;background:linear-gradient(180deg,#c08858,#4c505c 50%,#c08858)"></div></div></div></div>
<div class="a" style="left:131.5px;top:465.600px;width:113.8px;height:50px;border-radius:7px 7px 3px 3px;background:#465ec6"></div>
<div class="a" style="left:131.5px;top:516.900px;width:113.8px;height:35.900px;border-radius:0 0 5px 5px;background:#3f55b8"></div>
<div class="a" style="left:133.8px;top:468.3px;width:109.2px;height:44px;border-radius:5px;background:#0d0b11;overflow:hidden;filter:blur(.35px)"><div class="a" style="left:0;top:0"><div class="a" style="left:0;top:1.200px;width:76px;height:44px;background:#0d0b11"><div class="a" style="left:5px;top:4px;width:30px;height:1px;background:#3a3840"></div><div class="a" style="left:6px;top:9.500px;width:6px;height:6px;border-radius:50%;background:#e8142c"></div><div class="a" style="left:17px;top:9px;width:11px;height:7px;background:#e8e4e6"></div><div class="a" style="left:28px;top:10px;width:5px;height:5px;background:#4a4a50"></div><div class="a" style="left:34px;top:10px;width:8px;height:5px;background:#0c9be4"></div><div class="a" style="left:43px;top:10px;width:8px;height:5px;background:#0a66d2"></div><div class="a" style="left:52px;top:10px;width:8px;height:5px;background:#0c4d9c"></div><div class="a" style="left:6px;top:20.500px;width:6px;height:6px;border-radius:50%;background:#f0e8ea;border:1.500px solid #f0e8ea;background:#e81828"></div><div class="a" style="left:17px;top:19px;width:17px;height:9.500px;background:linear-gradient(180deg,#a21ad6 0 30%,#d8b070 30% 70%,#a21ad6 70%)"></div><div class="a" style="left:35px;top:19px;width:16.500px;height:9.500px;background:linear-gradient(90deg,#f0eeee 0 12%,#e81428 12% 35%,#f0eeee 35% 65%,#106080 65% 88%,#f0eeee 88%)"></div><div class="a" style="left:52px;top:19px;width:16.500px;height:9.500px;background:linear-gradient(115deg,#f0f0f0 0 15%,#f4451a 15% 60%,#e8e8e8 60% 70%,#56626a 70%)"></div><div class="a" style="left:69.500px;top:19px;width:7px;height:9.500px;background:linear-gradient(180deg,#58b0e4 0 25%,#4a7a28 25% 70%,#7a6848 70%)"></div><div class="a" style="left:6px;top:32.500px;width:6px;height:6px;border-radius:50%;background:#18e0a4"></div><div class="a" style="left:17px;top:31px;width:6.500px;height:10px;background:#dfe8ec"></div><div class="a" style="left:24.5px;top:31px;width:6.200px;height:10px;background:linear-gradient(180deg,#3c8cd0,#48b0b8 50%,#3c8cd0)"></div><div class="a" style="left:31.5px;top:31px;width:6.200px;height:10px;background:linear-gradient(180deg,#c08030,#d02028 50%,#c08030)"></div><div class="a" style="left:38.5px;top:31px;width:6.200px;height:10px;background:linear-gradient(180deg,#4c505c,#3058d0 50%,#4c505c)"></div><div class="a" style="left:45.5px;top:31px;width:6.200px;height:10px;background:linear-gradient(180deg,#48b0b8,#c870a8 50%,#48b0b8)"></div><div class="a" style="left:52.5px;top:31px;width:6.200px;height:10px;background:linear-gradient(180deg,#d02028,#c08858 50%,#d02028)"></div><div class="a" style="left:59.5px;top:31px;width:6.200px;height:10px;background:linear-gradient(180deg,#3058d0,#3c8cd0 50%,#3058d0)"></div><div class="a" style="left:66.5px;top:31px;width:6.200px;height:10px;background:linear-gradient(180deg,#c870a8,#c08030 50%,#c870a8)"></div><div class="a" style="left:73.5px;top:31px;width:6.200px;height:10px;background:linear-gradient(180deg,#c08858,#4c505c 50%,#c08858)"></div></div></div><div class="a" style="left:75.500px;top:0;width:2px;height:44px;background:#1c1820"></div><div class="a" style="left:77.500px;top:0"><div class="a" style="left:0;top:1.200px;width:76px;height:44px;background:#0d0b11"><div class="a" style="left:5px;top:4px;width:30px;height:1px;background:#3a3840"></div><div class="a" style="left:6px;top:9.500px;width:6px;height:6px;border-radius:50%;background:#e8142c"></div><div class="a" style="left:17px;top:9px;width:11px;height:7px;background:#e8e4e6"></div><div class="a" style="left:28px;top:10px;width:5px;height:5px;background:#4a4a50"></div><div class="a" style="left:34px;top:10px;width:8px;height:5px;background:#0c9be4"></div><div class="a" style="left:43px;top:10px;width:8px;height:5px;background:#0a66d2"></div><div class="a" style="left:52px;top:10px;width:8px;height:5px;background:#0c4d9c"></div><div class="a" style="left:6px;top:20.500px;width:6px;height:6px;border-radius:50%;background:#f0e8ea;border:1.500px solid #f0e8ea;background:#e81828"></div><div class="a" style="left:17px;top:19px;width:17px;height:9.500px;background:linear-gradient(180deg,#a21ad6 0 30%,#d8b070 30% 70%,#a21ad6 70%)"></div><div class="a" style="left:35px;top:19px;width:16.500px;height:9.500px;background:linear-gradient(90deg,#f0eeee 0 12%,#e81428 12% 35%,#f0eeee 35% 65%,#106080 65% 88%,#f0eeee 88%)"></div><div class="a" style="left:52px;top:19px;width:16.500px;height:9.500px;background:linear-gradient(115deg,#f0f0f0 0 15%,#f4451a 15% 60%,#e8e8e8 60% 70%,#56626a 70%)"></div><div class="a" style="left:69.500px;top:19px;width:7px;height:9.500px;background:linear-gradient(180deg,#58b0e4 0 25%,#4a7a28 25% 70%,#7a6848 70%)"></div><div class="a" style="left:6px;top:32.500px;width:6px;height:6px;border-radius:50%;background:#18e0a4"></div><div class="a" style="left:17px;top:31px;width:6.500px;height:10px;background:#dfe8ec"></div><div class="a" style="left:24.5px;top:31px;width:6.200px;height:10px;background:linear-gradient(180deg,#3c8cd0,#48b0b8 50%,#3c8cd0)"></div><div class="a" style="left:31.5px;top:31px;width:6.200px;height:10px;background:linear-gradient(180deg,#c08030,#d02028 50%,#c08030)"></div><div class="a" style="left:38.5px;top:31px;width:6.200px;height:10px;background:linear-gradient(180deg,#4c505c,#3058d0 50%,#4c505c)"></div><div class="a" style="left:45.5px;top:31px;width:6.200px;height:10px;background:linear-gradient(180deg,#48b0b8,#c870a8 50%,#48b0b8)"></div><div class="a" style="left:52.5px;top:31px;width:6.200px;height:10px;background:linear-gradient(180deg,#d02028,#c08858 50%,#d02028)"></div><div class="a" style="left:59.5px;top:31px;width:6.200px;height:10px;background:linear-gradient(180deg,#3058d0,#3c8cd0 50%,#3058d0)"></div><div class="a" style="left:66.5px;top:31px;width:6.200px;height:10px;background:linear-gradient(180deg,#c870a8,#c08030 50%,#c870a8)"></div><div class="a" style="left:73.5px;top:31px;width:6.200px;height:10px;background:linear-gradient(180deg,#c08858,#4c505c 50%,#c08858)"></div></div></div></div>
<div class="a" style="left:245.8px;top:465.300px;width:73.0px;height:88px;border-radius:7px 7px 6px 6px;background:#f6c000"></div>
<div class="a" style="left:250.6px;top:515.300px;width:63.4px;height:37.500px;background:#2e439c;border-radius:0 0 2px 2px"></div>
<div class="a" style="left:250.6px;top:468.3px;width:63.4px;height:44px;border-radius:5px;background:#0d0b11;overflow:hidden;filter:blur(.35px)"><div class="a" style="left:-3px;top:0"><div class="a" style="left:0;top:1.200px;width:76px;height:44px;background:#0d0b11"><div class="a" style="left:5px;top:4px;width:30px;height:1px;background:#3a3840"></div><div class="a" style="left:6px;top:9.500px;width:6px;height:6px;border-radius:50%;background:#e8142c"></div><div class="a" style="left:17px;top:9px;width:11px;height:7px;background:#e8e4e6"></div><div class="a" style="left:28px;top:10px;width:5px;height:5px;background:#4a4a50"></div><div class="a" style="left:34px;top:10px;width:8px;height:5px;background:#0c9be4"></div><div class="a" style="left:43px;top:10px;width:8px;height:5px;background:#0a66d2"></div><div class="a" style="left:52px;top:10px;width:8px;height:5px;background:#0c4d9c"></div><div class="a" style="left:6px;top:20.500px;width:6px;height:6px;border-radius:50%;background:#f0e8ea;border:1.500px solid #f0e8ea;background:#e81828"></div><div class="a" style="left:17px;top:19px;width:17px;height:9.500px;background:linear-gradient(180deg,#a21ad6 0 30%,#d8b070 30% 70%,#a21ad6 70%)"></div><div class="a" style="left:35px;top:19px;width:16.500px;height:9.500px;background:linear-gradient(90deg,#f0eeee 0 12%,#e81428 12% 35%,#f0eeee 35% 65%,#106080 65% 88%,#f0eeee 88%)"></div><div class="a" style="left:52px;top:19px;width:16.500px;height:9.500px;background:linear-gradient(115deg,#f0f0f0 0 15%,#f4451a 15% 60%,#e8e8e8 60% 70%,#56626a 70%)"></div><div class="a" style="left:69.500px;top:19px;width:7px;height:9.500px;background:linear-gradient(180deg,#58b0e4 0 25%,#4a7a28 25% 70%,#7a6848 70%)"></div><div class="a" style="left:6px;top:32.500px;width:6px;height:6px;border-radius:50%;background:#18e0a4"></div><div class="a" style="left:17px;top:31px;width:6.500px;height:10px;background:#dfe8ec"></div><div class="a" style="left:24.5px;top:31px;width:6.200px;height:10px;background:linear-gradient(180deg,#3c8cd0,#48b0b8 50%,#3c8cd0)"></div><div class="a" style="left:31.5px;top:31px;width:6.200px;height:10px;background:linear-gradient(180deg,#c08030,#d02028 50%,#c08030)"></div><div class="a" style="left:38.5px;top:31px;width:6.200px;height:10px;background:linear-gradient(180deg,#4c505c,#3058d0 50%,#4c505c)"></div><div class="a" style="left:45.5px;top:31px;width:6.200px;height:10px;background:linear-gradient(180deg,#48b0b8,#c870a8 50%,#48b0b8)"></div><div class="a" style="left:52.5px;top:31px;width:6.200px;height:10px;background:linear-gradient(180deg,#d02028,#c08858 50%,#d02028)"></div><div class="a" style="left:59.5px;top:31px;width:6.200px;height:10px;background:linear-gradient(180deg,#3058d0,#3c8cd0 50%,#3058d0)"></div><div class="a" style="left:66.5px;top:31px;width:6.200px;height:10px;background:linear-gradient(180deg,#c870a8,#c08030 50%,#c870a8)"></div><div class="a" style="left:73.5px;top:31px;width:6.200px;height:10px;background:linear-gradient(180deg,#c08858,#4c505c 50%,#c08858)"></div></div></div></div>
<div class="a" style="left:319px;top:465.600px;width:475.6px;height:50px;border-radius:7px 7px 3px 3px;background:#465ec6"></div>
<div class="a" style="left:319px;top:516.900px;width:475.6px;height:35.900px;border-radius:0 0 5px 5px;background:#3f55b8"></div>
<div class="a" style="left:321.3px;top:468.3px;width:471.0px;height:44px;border-radius:5px;background:#060609;overflow:hidden;filter:blur(.35px)"><div class="a" style="left:0.8px;top:1.200px;width:75.400px;height:42px;overflow:hidden;border-radius:1.500px"><div class="a" style="left:0;top:0;width:77px;height:43px;background:linear-gradient(90deg,#0c0e1c 0 28%,#141c3c 30%,#18204a 100%)"><div class="a" style="left:5px;top:10px;width:5px;height:5px;border-radius:50%;background:#4a1a28"></div><div class="a" style="left:5px;top:19px;width:5px;height:5px;border-radius:50%;background:#4a1a28"></div><div class="a" style="left:5px;top:28px;width:5px;height:5px;border-radius:50%;background:#4a1a28"></div><div class="a" style="left:5px;top:37px;width:5px;height:5px;border-radius:50%;background:#4a1a28"></div><div class="a" style="left:32px;top:5px;width:14px;height:4px;border-radius:2px;background:#24386a"></div><div class="a" style="left:52px;top:5px;width:14px;height:4px;border-radius:2px;background:#24386a"></div><div class="a" style="left:30.0px;top:15.0px;width:8px;height:5px;background:#f0f0f4"></div><div class="a" style="left:40.0px;top:15.0px;width:8px;height:5px;background:#18d0e0"></div><div class="a" style="left:50.0px;top:15.0px;width:8px;height:5px;background:#f0f0f4"></div><div class="a" style="left:60.0px;top:15.0px;width:8px;height:5px;background:#f0f0f4"></div><div class="a" style="left:30.0px;top:22.0px;width:8px;height:5px;background:#f0f0f4"></div><div class="a" style="left:40.0px;top:22.0px;width:8px;height:5px;background:#f0f0f4"></div><div class="a" style="left:50.0px;top:22.0px;width:8px;height:5px;background:#f0f0f4"></div><div class="a" style="left:60.0px;top:22.0px;width:8px;height:5px;background:#f0d070"></div><div class="a" style="left:30.0px;top:29.0px;width:8px;height:5px;background:#f0f0f4"></div><div class="a" style="left:40.0px;top:29.0px;width:8px;height:5px;background:#18d0e0"></div><div class="a" style="left:50.0px;top:29.0px;width:8px;height:5px;background:#3c5cc0"></div><div class="a" style="left:60.0px;top:29.0px;width:8px;height:5px;background:#18d0e0"></div><div class="a" style="left:30.0px;top:36.0px;width:8px;height:5px;background:#f0a050"></div><div class="a" style="left:40.0px;top:36.0px;width:8px;height:5px;background:#18d0e0"></div><div class="a" style="left:50.0px;top:36.0px;width:8px;height:5px;background:#18d0e0"></div><div class="a" style="left:60.0px;top:36.0px;width:8px;height:5px;background:#f0f0f4"></div></div></div><div class="a" style="left:81.4px;top:1.200px;width:75.400px;height:42px;overflow:hidden;border-radius:1.500px"><div class="a" style="left:0;top:0;width:77px;height:43px;background:#1a1617"><div class="a" style="left:6px;top:10px;width:5px;height:5px;border-radius:50%;background:#5a1820"></div><div class="a" style="left:6px;top:19px;width:5px;height:5px;border-radius:50%;background:#5a1820"></div><div class="a" style="left:6px;top:28px;width:5px;height:5px;border-radius:50%;background:#183828"></div><div class="a" style="left:6px;top:37px;width:5px;height:5px;border-radius:50%;background:#183828"></div><div class="a" style="left:23px;top:0;width:50px;height:43px;background:linear-gradient(180deg,#121014 0 66%,#6c666a 66% 100%)"></div><div class="a" style="left:29.0px;top:2.0px;width:8px;height:5px;background:#f4f0f0"></div><div class="a" style="left:39.0px;top:2.0px;width:8px;height:5px;background:#f4f4f4"></div><div class="a" style="left:49.0px;top:2.0px;width:8px;height:5px;background:#f0f4f0"></div><div class="a" style="left:59.0px;top:2.0px;width:8px;height:5px;background:#f0501c"></div><div class="a" style="left:29.0px;top:9.0px;width:8px;height:5px;background:#f0f0f4"></div><div class="a" style="left:39.0px;top:9.0px;width:8px;height:5px;background:#18c0e8"></div><div class="a" style="left:49.0px;top:9.0px;width:8px;height:5px;background:#209898"></div><div class="a" style="left:59.0px;top:9.0px;width:8px;height:5px;background:#1464d8"></div><div class="a" style="left:29.0px;top:16.0px;width:8px;height:5px;background:#f0501c"></div><div class="a" style="left:39.0px;top:16.0px;width:8px;height:5px;background:#18c0e8"></div><div class="a" style="left:49.0px;top:16.0px;width:8px;height:5px;background:#18d0e0"></div><div class="a" style="left:59.0px;top:16.0px;width:8px;height:5px;background:#f0f0e8"></div><div class="a" style="left:29.0px;top:23.0px;width:8px;height:5px;background:#e82818"></div><div class="a" style="left:39.0px;top:23.0px;width:8px;height:5px;background:#18d8e8"></div><div class="a" style="left:49.0px;top:23.0px;width:8px;height:5px;background:#f0f0f4"></div><div class="a" style="left:59.0px;top:23.0px;width:8px;height:5px;background:#18c8e0"></div><div class="a" style="left:30px;top:33px;width:8px;height:5px;background:#3a3c58"></div><div class="a" style="left:40px;top:33px;width:8px;height:5px;background:#141418"></div></div></div><div class="a" style="left:162.0px;top:1.200px;width:75.400px;height:42px;overflow:hidden;border-radius:1.500px"><div class="a" style="left:0;top:0;width:77px;height:43px;background:#1a1617"><div class="a" style="left:6px;top:10px;width:5px;height:5px;border-radius:50%;background:#5a1820"></div><div class="a" style="left:6px;top:19px;width:5px;height:5px;border-radius:50%;background:#5a1820"></div><div class="a" style="left:6px;top:28px;width:5px;height:5px;border-radius:50%;background:#183828"></div><div class="a" style="left:6px;top:37px;width:5px;height:5px;border-radius:50%;background:#183828"></div><div class="a" style="left:23px;top:0;width:50px;height:43px;background:linear-gradient(180deg,#121014 0 66%,#6c666a 66% 100%)"></div><div class="a" style="left:29.0px;top:2.0px;width:8px;height:5px;background:#f4f0f0"></div><div class="a" style="left:39.0px;top:2.0px;width:8px;height:5px;background:#f4f4f4"></div><div class="a" style="left:49.0px;top:2.0px;width:8px;height:5px;background:#f0f4f0"></div><div class="a" style="left:59.0px;top:2.0px;width:8px;height:5px;background:#f0501c"></div><div class="a" style="left:29.0px;top:9.0px;width:8px;height:5px;background:#f0f0f4"></div><div class="a" style="left:39.0px;top:9.0px;width:8px;height:5px;background:#18c0e8"></div><div class="a" style="left:49.0px;top:9.0px;width:8px;height:5px;background:#209898"></div><div class="a" style="left:59.0px;top:9.0px;width:8px;height:5px;background:#1464d8"></div><div class="a" style="left:29.0px;top:16.0px;width:8px;height:5px;background:#f0501c"></div><div class="a" style="left:39.0px;top:16.0px;width:8px;height:5px;background:#18c0e8"></div><div class="a" style="left:49.0px;top:16.0px;width:8px;height:5px;background:#18d0e0"></div><div class="a" style="left:59.0px;top:16.0px;width:8px;height:5px;background:#f0f0e8"></div><div class="a" style="left:29.0px;top:23.0px;width:8px;height:5px;background:#e82818"></div><div class="a" style="left:39.0px;top:23.0px;width:8px;height:5px;background:#18d8e8"></div><div class="a" style="left:49.0px;top:23.0px;width:8px;height:5px;background:#f0f0f4"></div><div class="a" style="left:59.0px;top:23.0px;width:8px;height:5px;background:#18c8e0"></div><div class="a" style="left:30px;top:33px;width:8px;height:5px;background:#3a3c58"></div><div class="a" style="left:40px;top:33px;width:8px;height:5px;background:#141418"></div></div></div><div class="a" style="left:242.6px;top:1.200px;width:75.400px;height:42px;overflow:hidden;border-radius:1.500px"><div class="a" style="left:0;top:0;width:77px;height:43px;background:#1a1617"><div class="a" style="left:6px;top:10px;width:5px;height:5px;border-radius:50%;background:#5a1820"></div><div class="a" style="left:6px;top:19px;width:5px;height:5px;border-radius:50%;background:#5a1820"></div><div class="a" style="left:6px;top:28px;width:5px;height:5px;border-radius:50%;background:#183828"></div><div class="a" style="left:6px;top:37px;width:5px;height:5px;border-radius:50%;background:#183828"></div><div class="a" style="left:23px;top:0;width:50px;height:43px;background:linear-gradient(180deg,#121014 0 66%,#6c666a 66% 100%)"></div><div class="a" style="left:29.0px;top:2.0px;width:8px;height:5px;background:#f4f0f0"></div><div class="a" style="left:39.0px;top:2.0px;width:8px;height:5px;background:#f4f4f4"></div><div class="a" style="left:49.0px;top:2.0px;width:8px;height:5px;background:#f0f4f0"></div><div class="a" style="left:59.0px;top:2.0px;width:8px;height:5px;background:#f0501c"></div><div class="a" style="left:29.0px;top:9.0px;width:8px;height:5px;background:#f0f0f4"></div><div class="a" style="left:39.0px;top:9.0px;width:8px;height:5px;background:#18c0e8"></div><div class="a" style="left:49.0px;top:9.0px;width:8px;height:5px;background:#209898"></div><div class="a" style="left:59.0px;top:9.0px;width:8px;height:5px;background:#1464d8"></div><div class="a" style="left:29.0px;top:16.0px;width:8px;height:5px;background:#f0501c"></div><div class="a" style="left:39.0px;top:16.0px;width:8px;height:5px;background:#18c0e8"></div><div class="a" style="left:49.0px;top:16.0px;width:8px;height:5px;background:#18d0e0"></div><div class="a" style="left:59.0px;top:16.0px;width:8px;height:5px;background:#f0f0e8"></div><div class="a" style="left:29.0px;top:23.0px;width:8px;height:5px;background:#e82818"></div><div class="a" style="left:39.0px;top:23.0px;width:8px;height:5px;background:#18d8e8"></div><div class="a" style="left:49.0px;top:23.0px;width:8px;height:5px;background:#f0f0f4"></div><div class="a" style="left:59.0px;top:23.0px;width:8px;height:5px;background:#18c8e0"></div><div class="a" style="left:30px;top:33px;width:8px;height:5px;background:#3a3c58"></div><div class="a" style="left:40px;top:33px;width:8px;height:5px;background:#141418"></div></div></div><div class="a" style="left:323.2px;top:1.200px;width:75.400px;height:42px;overflow:hidden;border-radius:1.500px"><div class="a" style="left:0;top:0;width:77px;height:43px;background:#1a1617"><div class="a" style="left:6px;top:10px;width:5px;height:5px;border-radius:50%;background:#5a1820"></div><div class="a" style="left:6px;top:19px;width:5px;height:5px;border-radius:50%;background:#5a1820"></div><div class="a" style="left:6px;top:28px;width:5px;height:5px;border-radius:50%;background:#183828"></div><div class="a" style="left:6px;top:37px;width:5px;height:5px;border-radius:50%;background:#183828"></div><div class="a" style="left:23px;top:0;width:50px;height:43px;background:linear-gradient(180deg,#121014 0 66%,#6c666a 66% 100%)"></div><div class="a" style="left:29.0px;top:2.0px;width:8px;height:5px;background:#f4f0f0"></div><div class="a" style="left:39.0px;top:2.0px;width:8px;height:5px;background:#f4f4f4"></div><div class="a" style="left:49.0px;top:2.0px;width:8px;height:5px;background:#f0f4f0"></div><div class="a" style="left:59.0px;top:2.0px;width:8px;height:5px;background:#f0501c"></div><div class="a" style="left:29.0px;top:9.0px;width:8px;height:5px;background:#f0f0f4"></div><div class="a" style="left:39.0px;top:9.0px;width:8px;height:5px;background:#18c0e8"></div><div class="a" style="left:49.0px;top:9.0px;width:8px;height:5px;background:#209898"></div><div class="a" style="left:59.0px;top:9.0px;width:8px;height:5px;background:#1464d8"></div><div class="a" style="left:29.0px;top:16.0px;width:8px;height:5px;background:#f0501c"></div><div class="a" style="left:39.0px;top:16.0px;width:8px;height:5px;background:#18c0e8"></div><div class="a" style="left:49.0px;top:16.0px;width:8px;height:5px;background:#18d0e0"></div><div class="a" style="left:59.0px;top:16.0px;width:8px;height:5px;background:#f0f0e8"></div><div class="a" style="left:29.0px;top:23.0px;width:8px;height:5px;background:#e82818"></div><div class="a" style="left:39.0px;top:23.0px;width:8px;height:5px;background:#18d8e8"></div><div class="a" style="left:49.0px;top:23.0px;width:8px;height:5px;background:#f0f0f4"></div><div class="a" style="left:59.0px;top:23.0px;width:8px;height:5px;background:#18c8e0"></div><div class="a" style="left:30px;top:33px;width:8px;height:5px;background:#3a3c58"></div><div class="a" style="left:40px;top:33px;width:8px;height:5px;background:#141418"></div></div></div><div class="a" style="left:403.8px;top:1.200px;width:75.400px;height:42px;overflow:hidden;border-radius:1.500px"><div class="a" style="left:0;top:0;width:77px;height:43px;background:#1a1617"><div class="a" style="left:6px;top:10px;width:5px;height:5px;border-radius:50%;background:#5a1820"></div><div class="a" style="left:6px;top:19px;width:5px;height:5px;border-radius:50%;background:#5a1820"></div><div class="a" style="left:6px;top:28px;width:5px;height:5px;border-radius:50%;background:#183828"></div><div class="a" style="left:6px;top:37px;width:5px;height:5px;border-radius:50%;background:#183828"></div><div class="a" style="left:23px;top:0;width:50px;height:43px;background:linear-gradient(180deg,#121014 0 66%,#6c666a 66% 100%)"></div><div class="a" style="left:29.0px;top:2.0px;width:8px;height:5px;background:#f4f0f0"></div><div class="a" style="left:39.0px;top:2.0px;width:8px;height:5px;background:#f4f4f4"></div><div class="a" style="left:49.0px;top:2.0px;width:8px;height:5px;background:#f0f4f0"></div><div class="a" style="left:59.0px;top:2.0px;width:8px;height:5px;background:#f0501c"></div><div class="a" style="left:29.0px;top:9.0px;width:8px;height:5px;background:#f0f0f4"></div><div class="a" style="left:39.0px;top:9.0px;width:8px;height:5px;background:#18c0e8"></div><div class="a" style="left:49.0px;top:9.0px;width:8px;height:5px;background:#209898"></div><div class="a" style="left:59.0px;top:9.0px;width:8px;height:5px;background:#1464d8"></div><div class="a" style="left:29.0px;top:16.0px;width:8px;height:5px;background:#f0501c"></div><div class="a" style="left:39.0px;top:16.0px;width:8px;height:5px;background:#18c0e8"></div><div class="a" style="left:49.0px;top:16.0px;width:8px;height:5px;background:#18d0e0"></div><div class="a" style="left:59.0px;top:16.0px;width:8px;height:5px;background:#f0f0e8"></div><div class="a" style="left:29.0px;top:23.0px;width:8px;height:5px;background:#e82818"></div><div class="a" style="left:39.0px;top:23.0px;width:8px;height:5px;background:#18d8e8"></div><div class="a" style="left:49.0px;top:23.0px;width:8px;height:5px;background:#f0f0f4"></div><div class="a" style="left:59.0px;top:23.0px;width:8px;height:5px;background:#18c8e0"></div><div class="a" style="left:30px;top:33px;width:8px;height:5px;background:#3a3c58"></div><div class="a" style="left:40px;top:33px;width:8px;height:5px;background:#141418"></div></div></div></div>
<div class="a" style="left:796.8px;top:465.600px;width:426.0px;height:50px;border-radius:7px 7px 3px 3px;background:#465ec6"></div>
<div class="a" style="left:796.8px;top:516.900px;width:426.0px;height:35.900px;border-radius:0 0 5px 5px;background:#3f55b8"></div>
<div class="a" style="left:799.1px;top:468.3px;width:421.4px;height:44px;border-radius:5px;background:#060609;overflow:hidden;filter:blur(.35px)"><div class="a" style="left:1.2px;top:1.200px;width:75.400px;height:42px;overflow:hidden;border-radius:1.500px"><div class="a" style="left:0;top:0;width:77px;height:43px;background:#1a1617"><div class="a" style="left:6px;top:10px;width:5px;height:5px;border-radius:50%;background:#5a1820"></div><div class="a" style="left:6px;top:19px;width:5px;height:5px;border-radius:50%;background:#5a1820"></div><div class="a" style="left:6px;top:28px;width:5px;height:5px;border-radius:50%;background:#183828"></div><div class="a" style="left:6px;top:37px;width:5px;height:5px;border-radius:50%;background:#183828"></div><div class="a" style="left:23px;top:0;width:50px;height:43px;background:linear-gradient(180deg,#121014 0 66%,#6c666a 66% 100%)"></div><div class="a" style="left:29.0px;top:2.0px;width:8px;height:5px;background:#f4f0f0"></div><div class="a" style="left:39.0px;top:2.0px;width:8px;height:5px;background:#f4f4f4"></div><div class="a" style="left:49.0px;top:2.0px;width:8px;height:5px;background:#f0f4f0"></div><div class="a" style="left:59.0px;top:2.0px;width:8px;height:5px;background:#f0501c"></div><div class="a" style="left:29.0px;top:9.0px;width:8px;height:5px;background:#f0f0f4"></div><div class="a" style="left:39.0px;top:9.0px;width:8px;height:5px;background:#18c0e8"></div><div class="a" style="left:49.0px;top:9.0px;width:8px;height:5px;background:#209898"></div><div class="a" style="left:59.0px;top:9.0px;width:8px;height:5px;background:#1464d8"></div><div class="a" style="left:29.0px;top:16.0px;width:8px;height:5px;background:#f0501c"></div><div class="a" style="left:39.0px;top:16.0px;width:8px;height:5px;background:#18c0e8"></div><div class="a" style="left:49.0px;top:16.0px;width:8px;height:5px;background:#18d0e0"></div><div class="a" style="left:59.0px;top:16.0px;width:8px;height:5px;background:#f0f0e8"></div><div class="a" style="left:29.0px;top:23.0px;width:8px;height:5px;background:#e82818"></div><div class="a" style="left:39.0px;top:23.0px;width:8px;height:5px;background:#18d8e8"></div><div class="a" style="left:49.0px;top:23.0px;width:8px;height:5px;background:#f0f0f4"></div><div class="a" style="left:59.0px;top:23.0px;width:8px;height:5px;background:#18c8e0"></div><div class="a" style="left:30px;top:33px;width:8px;height:5px;background:#3a3c58"></div><div class="a" style="left:40px;top:33px;width:8px;height:5px;background:#141418"></div></div></div><div class="a" style="left:81.7px;top:1.200px;width:75.400px;height:42px;overflow:hidden;border-radius:1.500px"><div class="a" style="left:0;top:0;width:77px;height:43px;background:#1a1617"><div class="a" style="left:6px;top:10px;width:5px;height:5px;border-radius:50%;background:#5a1820"></div><div class="a" style="left:6px;top:19px;width:5px;height:5px;border-radius:50%;background:#5a1820"></div><div class="a" style="left:6px;top:28px;width:5px;height:5px;border-radius:50%;background:#183828"></div><div class="a" style="left:6px;top:37px;width:5px;height:5px;border-radius:50%;background:#183828"></div><div class="a" style="left:23px;top:0;width:50px;height:43px;background:linear-gradient(180deg,#121014 0 66%,#6c666a 66% 100%)"></div><div class="a" style="left:29.0px;top:2.0px;width:8px;height:5px;background:#f4f0f0"></div><div class="a" style="left:39.0px;top:2.0px;width:8px;height:5px;background:#f4f4f4"></div><div class="a" style="left:49.0px;top:2.0px;width:8px;height:5px;background:#f0f4f0"></div><div class="a" style="left:59.0px;top:2.0px;width:8px;height:5px;background:#f0501c"></div><div class="a" style="left:29.0px;top:9.0px;width:8px;height:5px;background:#f0f0f4"></div><div class="a" style="left:39.0px;top:9.0px;width:8px;height:5px;background:#18c0e8"></div><div class="a" style="left:49.0px;top:9.0px;width:8px;height:5px;background:#209898"></div><div class="a" style="left:59.0px;top:9.0px;width:8px;height:5px;background:#1464d8"></div><div class="a" style="left:29.0px;top:16.0px;width:8px;height:5px;background:#f0501c"></div><div class="a" style="left:39.0px;top:16.0px;width:8px;height:5px;background:#18c0e8"></div><div class="a" style="left:49.0px;top:16.0px;width:8px;height:5px;background:#18d0e0"></div><div class="a" style="left:59.0px;top:16.0px;width:8px;height:5px;background:#f0f0e8"></div><div class="a" style="left:29.0px;top:23.0px;width:8px;height:5px;background:#e82818"></div><div class="a" style="left:39.0px;top:23.0px;width:8px;height:5px;background:#18d8e8"></div><div class="a" style="left:49.0px;top:23.0px;width:8px;height:5px;background:#f0f0f4"></div><div class="a" style="left:59.0px;top:23.0px;width:8px;height:5px;background:#18c8e0"></div><div class="a" style="left:30px;top:33px;width:8px;height:5px;background:#3a3c58"></div><div class="a" style="left:40px;top:33px;width:8px;height:5px;background:#141418"></div></div></div><div class="a" style="left:162.2px;top:1.200px;width:75.400px;height:42px;overflow:hidden;border-radius:1.500px"><div class="a" style="left:0;top:0;width:77px;height:43px;background:#e6e0ea"><div class="a" style="left:0;top:0;width:77px;height:3px;background:#c4ccc0"></div><div class="a" style="left:0;top:3px;width:18px;height:40px;background:#cfe4f4"></div><div class="a" style="left:2px;top:8px;width:14px;height:3px;background:#58a0e0"></div><div class="a" style="left:20px;top:14px;width:13px;height:13px;border-radius:50%;background:conic-gradient(#e84c3c 0 120deg,#f0c030 120deg 240deg,#3cac5c 240deg);opacity:.8"></div><div class="a" style="left:24px;top:18px;width:5px;height:5px;border-radius:50%;background:#4c8ce8;border:1px solid #fff"></div><div class="a" style="left:29px;top:15px;width:20px;height:11px;border-radius:1px;background:#d4d0d8"></div><div class="a" style="left:40px;top:22px;width:6px;height:3px;background:#484858"></div><div class="a" style="left:58px;top:24px;width:10px;height:3px;background:#d8e4b0"></div><div class="a" style="left:20px;top:31px;width:28px;height:12px;background:linear-gradient(135deg,#a4dcec 0 55%,#f0ecc8 55%)"></div><div class="a" style="left:50px;top:31px;width:20px;height:12px;background:#f4e4a8"></div></div></div><div class="a" style="left:242.7px;top:1.200px;width:75.400px;height:42px;overflow:hidden;border-radius:1.500px"><div class="a" style="left:0;top:0;width:77px;height:43px;background:#efdde3"><div class="a" style="left:0;top:0;width:77px;height:3px;background:#c4ccc0"></div><div class="a" style="left:20px;top:14px;width:13px;height:13px;border-radius:50%;background:conic-gradient(#e84c3c 0 120deg,#f0c030 120deg 240deg,#3cac5c 240deg);opacity:.8"></div><div class="a" style="left:24px;top:18px;width:5px;height:5px;border-radius:50%;background:#4c8ce8;border:1px solid #fff"></div><div class="a" style="left:29px;top:15px;width:20px;height:11px;border-radius:1px;background:#d4d0d8"></div><div class="a" style="left:40px;top:22px;width:6px;height:3px;background:#484858"></div><div class="a" style="left:58px;top:24px;width:10px;height:3px;background:#d8e4b0"></div><div class="a" style="left:20px;top:31px;width:28px;height:12px;background:linear-gradient(135deg,#a4dcec 0 55%,#f0ecc8 55%)"></div><div class="a" style="left:50px;top:31px;width:20px;height:12px;background:#f4e4a8"></div></div></div><div class="a" style="left:323.2px;top:1.200px;width:75.400px;height:42px;overflow:hidden;border-radius:1.500px"><div class="a" style="left:0;top:0;width:77px;height:43px;background:#efdde3"><div class="a" style="left:0;top:0;width:77px;height:3px;background:#c4ccc0"></div><div class="a" style="left:20px;top:14px;width:13px;height:13px;border-radius:50%;background:conic-gradient(#e84c3c 0 120deg,#f0c030 120deg 240deg,#3cac5c 240deg);opacity:.8"></div><div class="a" style="left:24px;top:18px;width:5px;height:5px;border-radius:50%;background:#4c8ce8;border:1px solid #fff"></div><div class="a" style="left:29px;top:15px;width:20px;height:11px;border-radius:1px;background:#d4d0d8"></div><div class="a" style="left:40px;top:22px;width:6px;height:3px;background:#484858"></div><div class="a" style="left:58px;top:24px;width:10px;height:3px;background:#d8e4b0"></div><div class="a" style="left:20px;top:31px;width:28px;height:12px;background:linear-gradient(135deg,#a4dcec 0 55%,#f0ecc8 55%)"></div><div class="a" style="left:50px;top:31px;width:20px;height:12px;background:#f4e4a8"></div></div></div><div class="a" style="left:403.7px;top:1.200px;width:75.400px;height:42px;overflow:hidden;border-radius:1.500px"><div class="a" style="left:0;top:0;width:77px;height:43px;background:#f6f4f6"><div class="a" style="left:0;top:0;width:77px;height:4px;background:#38a848"></div><div class="a" style="left:0;top:4px;width:8px;height:39px;background:#e4ece0"></div><div class="a" style="left:1px;top:7px;width:6px;height:2px;background:#48a850;box-shadow:0 4px #b0c8b0,0 8px #b0c8b0,0 12px #b0c8b0,0 16px #b0c8b0"></div><div class="a" style="left:25px;top:10px;width:16px;height:16px;border-radius:50%;background:conic-gradient(#e84030 0 120deg,#f4c420 120deg 240deg,#34a853 240deg)"></div><div class="a" style="left:30px;top:15px;width:6px;height:6px;border-radius:50%;background:#4285f4;border:1.200px solid #fff"></div><div class="a" style="left:45px;top:10px;width:30px;height:2px;background:#606468;box-shadow:0 4px #a0a4a8,0 8px #38a848"></div><div class="a" style="left:24px;top:30px;width:22px;height:13px;background:linear-gradient(135deg,#2c90e0 0 50%,#38b868 50%)"></div><div class="a" style="left:48px;top:30px;width:29px;height:13px;background:linear-gradient(90deg,#d8e8f0,#a8d0e8)"></div></div></div></div>
<div class="a" style="left:1225.3px;top:465.600px;width:74.7px;height:50px;border-radius:7px 7px 3px 3px;background:#465ec6"></div>
<div class="a" style="left:1225.3px;top:516.900px;width:74.7px;height:35.900px;border-radius:0 0 5px 5px;background:#3f55b8"></div>
<div class="a" style="left:1227.6px;top:468.3px;width:70.1px;height:44px;border-radius:5px;background:#060609;overflow:hidden;filter:blur(.35px)"><div class="a" style="left:.5px;top:1.200px;width:75.400px;height:42px;overflow:hidden"><div class="a" style="left:0;top:0;width:77px;height:43px;background:#f6f4f6"><div class="a" style="left:0;top:0;width:77px;height:4px;background:#38a848"></div><div class="a" style="left:0;top:4px;width:8px;height:39px;background:#e4ece0"></div><div class="a" style="left:1px;top:7px;width:6px;height:2px;background:#48a850;box-shadow:0 4px #b0c8b0,0 8px #b0c8b0,0 12px #b0c8b0,0 16px #b0c8b0"></div><div class="a" style="left:25px;top:10px;width:16px;height:16px;border-radius:50%;background:conic-gradient(#e84030 0 120deg,#f4c420 120deg 240deg,#34a853 240deg)"></div><div class="a" style="left:30px;top:15px;width:6px;height:6px;border-radius:50%;background:#4285f4;border:1.200px solid #fff"></div><div class="a" style="left:45px;top:10px;width:30px;height:2px;background:#606468;box-shadow:0 4px #a0a4a8,0 8px #38a848"></div><div class="a" style="left:24px;top:30px;width:22px;height:13px;background:linear-gradient(135deg,#2c90e0 0 50%,#38b868 50%)"></div><div class="a" style="left:48px;top:30px;width:29px;height:13px;background:linear-gradient(90deg,#d8e8f0,#a8d0e8)"></div></div></div></div>
<svg class="a" style="left:0;top:440px" width="1280" height="130" viewBox="0 440 1280 130"><polygon points="70.8,552.6 70.8,547.9 71.8,547.9 71.8,541.0 73.8,541.0 73.8,541.3 74.8,541.3 74.8,546.4 75.8,546.4 75.8,537.9 76.8,537.9 76.8,538.5 77.8,538.5 77.8,538.5 79.3,538.5 79.3,536.5 80.3,536.5 80.3,535.6 81.8,535.6 81.8,533.0 82.8,533.0 82.8,533.2 83.8,533.2 83.8,544.1 84.8,544.1 84.8,541.1 85.8,541.1 85.8,534.8 87.8,534.8 87.8,545.8 88.8,545.8 88.8,538.1 90.3,538.1 90.3,538.2 91.8,538.2 91.8,534.2 93.8,534.2 93.8,538.2 94.8,538.2 94.8,535.8 96.3,535.8 96.3,542.7 98.3,542.7 98.3,538.3 100.3,538.3 100.3,541.5 101.3,541.5 101.3,539.9 102.3,539.9 102.3,547.5 103.3,547.5 103.3,536.8 104.3,536.8 104.3,536.6 105.3,536.6 105.3,535.2 106.8,535.2 106.8,537.8 107.8,537.8 107.8,533.6 108.8,533.6 108.8,537.3 110.8,537.3 110.8,539.8 111.8,539.8 111.8,538.8 113.8,538.8 113.8,538.7 115.8,538.7 115.8,540.8 116.8,540.8 116.8,533.4 117.8,533.4 117.8,547.8 118.8,547.8 118.8,549.1 120.8,549.1 120.8,545.3 122.8,545.3 122.8,535.6 123.8,535.6 123.8,536.8 125.8,536.8 125.8,548.0 127.8,548.0 127.8,540.6 129.0,540.6 129.0,552.6" fill="#a0acf0"/><polygon points="132.0,552.6 132.0,545.0 133.5,545.0 133.5,543.7 134.5,543.7 134.5,543.0 136.5,543.0 136.5,544.4 138.5,544.4 138.5,549.4 139.5,549.4 139.5,543.3 140.5,543.3 140.5,543.6 142.5,543.6 142.5,543.4 144.5,543.4 144.5,549.0 146.0,549.0 146.0,539.3 148.0,539.3 148.0,540.6 149.0,540.6 149.0,539.1 150.0,539.1 150.0,540.6 151.0,540.6 151.0,541.3 152.5,541.3 152.5,546.2 153.5,546.2 153.5,541.3 155.0,541.3 155.0,549.2 156.5,549.2 156.5,543.6 157.5,543.6 157.5,544.8 159.0,544.8 159.0,549.5 160.0,549.5 160.0,551.8 161.5,551.8 161.5,551.6 163.5,551.6 163.5,551.8 165.5,551.8 165.5,551.8 166.5,551.8 166.5,551.7 168.5,551.7 168.5,551.6 169.5,551.6 169.5,551.6 171.0,551.6 171.0,551.0 172.5,551.0 172.5,549.1 174.0,549.1 174.0,547.9 175.5,547.9 175.5,542.7 177.0,542.7 177.0,548.6 178.0,548.6 178.0,547.6 180.0,547.6 180.0,546.1 181.5,546.1 181.5,548.5 182.5,548.5 182.5,539.9 184.0,539.9 184.0,547.4 185.5,547.4 185.5,537.9 187.5,537.9 187.5,541.9 188.5,541.9 188.5,546.3 189.5,546.3 189.5,537.8 191.5,537.8 191.5,526.8 193.0,526.8 193.0,519.1 194.0,519.1 194.0,543.2 195.5,543.2 195.5,546.4 197.0,546.4 197.0,547.0 199.0,547.0 199.0,542.2 200.0,542.2 200.0,546.1 202.0,546.1 202.0,545.3 203.0,545.3 203.0,541.7 205.0,541.7 205.0,538.3 206.0,538.3 206.0,543.7 207.5,543.7 207.5,538.8 209.5,538.8 209.5,543.0 210.5,543.0 210.5,548.3 211.5,548.3 211.5,546.9 213.5,546.9 213.5,549.2 214.5,549.2 214.5,549.1 215.5,549.1 215.5,551.2 216.5,551.2 216.5,548.1 217.5,548.1 217.5,547.2 218.5,547.2 218.5,547.3 219.5,547.3 219.5,548.7 220.5,548.7 220.5,548.3 221.5,548.3 221.5,551.0 222.5,551.0 222.5,549.8 223.5,549.8 223.5,550.5 224.5,550.5 224.5,551.5 226.5,551.5 226.5,551.3 227.5,551.3 227.5,550.7 228.5,550.7 228.5,550.2 229.5,550.2 229.5,549.4 230.5,549.4 230.5,550.2 232.5,550.2 232.5,549.6 234.0,549.6 234.0,547.8 236.0,547.8 236.0,545.3 237.0,545.3 237.0,543.1 239.0,543.1 239.0,542.3 240.5,542.3 240.5,545.7 241.5,545.7 241.5,548.6 243.0,548.6 243.0,551.0 244.8,551.0 244.8,552.6" fill="#a0acf0"/><g fill="#1a1400"><circle cx="248.2" cy="472.0" r=".95"/><circle cx="316.4" cy="472.0" r=".95"/><circle cx="248.2" cy="477.1" r=".95"/><circle cx="316.4" cy="477.1" r=".95"/><circle cx="248.2" cy="482.1" r=".95"/><circle cx="316.4" cy="482.1" r=".95"/><circle cx="248.2" cy="487.1" r=".95"/><circle cx="316.4" cy="487.1" r=".95"/><circle cx="248.2" cy="492.2" r=".95"/><circle cx="316.4" cy="492.2" r=".95"/><circle cx="248.2" cy="497.2" r=".95"/><circle cx="316.4" cy="497.2" r=".95"/><circle cx="248.2" cy="502.3" r=".95"/><circle cx="316.4" cy="502.3" r=".95"/><circle cx="248.2" cy="507.4" r=".95"/><circle cx="316.4" cy="507.4" r=".95"/><circle cx="248.2" cy="512.4" r=".95"/><circle cx="316.4" cy="512.4" r=".95"/><circle cx="248.2" cy="517.5" r=".95"/><circle cx="316.4" cy="517.5" r=".95"/><circle cx="248.2" cy="522.5" r=".95"/><circle cx="316.4" cy="522.5" r=".95"/><circle cx="248.2" cy="527.5" r=".95"/><circle cx="316.4" cy="527.5" r=".95"/><circle cx="248.2" cy="532.6" r=".95"/><circle cx="316.4" cy="532.6" r=".95"/><circle cx="248.2" cy="537.6" r=".95"/><circle cx="316.4" cy="537.6" r=".95"/><circle cx="248.2" cy="542.7" r=".95"/><circle cx="316.4" cy="542.7" r=".95"/><circle cx="248.2" cy="547.8" r=".95"/><circle cx="316.4" cy="547.8" r=".95"/></g><polygon points="253.6,552.6 253.6,550.5 254.6,550.5 254.6,548.2 255.6,548.2 255.6,548.0 256.6,548.0 256.6,547.6 257.6,547.6 257.6,547.4 258.6,547.4 258.6,547.4 259.6,547.4 259.6,546.1 261.6,546.1 261.6,544.7 262.6,544.7 262.6,545.6 264.6,545.6 264.6,546.5 265.6,546.5 265.6,546.5 266.6,546.5 266.6,546.2 268.6,546.2 268.6,547.3 269.6,547.3 269.6,546.8 270.6,546.8 270.6,545.6 272.6,545.6 272.6,543.6 274.1,543.6 274.1,542.8 276.1,542.8 276.1,538.9 277.1,538.9 277.1,541.6 278.1,541.6 278.1,544.3 279.1,544.3 279.1,544.7 280.1,544.7 280.1,548.5 282.1,548.5 282.1,546.6 283.1,546.6 283.1,549.9 284.1,549.9 284.1,550.1 285.1,550.1 285.1,547.2 286.1,547.2 286.1,550.3 287.1,550.3 287.1,549.5 288.1,549.5 288.1,547.9 290.1,547.9 290.1,548.1 291.1,548.1 291.1,545.1 292.1,545.1 292.1,549.4 294.1,549.4 294.1,541.0 295.1,541.0 295.1,546.6 297.1,546.6 297.1,546.1 299.1,546.1 299.1,549.9 301.1,549.9 301.1,548.2 302.1,548.2 302.1,543.2 303.1,543.2 303.1,542.7 304.6,542.7 304.6,543.4 305.6,543.4 305.6,543.1 306.6,543.1 306.6,541.0 307.6,541.0 307.6,543.1 309.6,543.1 309.6,546.5 311.1,546.5 311.1,546.9 313.1,546.9 313.1,547.9 314.0,547.9 314.0,552.6" fill="#4c62bc"/><polygon points="319.5,552.6 319.5,540.0 320.5,540.0 320.5,540.5 322.5,540.5 322.5,543.2 323.5,543.2 323.5,544.5 324.5,544.5 324.5,517.2 325.5,517.2 325.5,543.5 327.5,543.5 327.5,541.6 329.5,541.6 329.5,545.0 330.5,545.0 330.5,540.6 331.5,540.6 331.5,545.8 333.5,545.8 333.5,545.5 334.5,545.5 334.5,546.2 336.5,546.2 336.5,545.5 338.0,545.5 338.0,523.8 339.0,523.8 339.0,543.3 340.5,543.3 340.5,533.3 341.5,533.3 341.5,542.2 342.5,542.2 342.5,542.8 343.5,542.8 343.5,544.4 345.5,544.4 345.5,543.8 347.5,543.8 347.5,537.9 348.5,537.9 348.5,546.2 349.5,546.2 349.5,544.9 350.5,544.9 350.5,545.8 351.5,545.8 351.5,545.8 353.5,545.8 353.5,547.1 354.5,547.1 354.5,546.0 355.5,546.0 355.5,543.0 357.0,543.0 357.0,536.0 358.0,536.0 358.0,542.3 360.0,542.3 360.0,544.1 361.0,544.1 361.0,542.4 363.0,542.4 363.0,545.2 365.0,545.2 365.0,541.5 366.5,541.5 366.5,548.9 368.0,548.9 368.0,549.6 370.0,549.6 370.0,547.6 372.0,547.6 372.0,541.4 374.0,541.4 374.0,547.9 375.0,547.9 375.0,533.4 376.0,533.4 376.0,547.9 378.0,547.9 378.0,549.0 379.0,549.0 379.0,548.1 380.0,548.1 380.0,549.4 381.0,549.4 381.0,547.4 382.0,547.4 382.0,546.6 383.0,546.6 383.0,545.3 385.0,545.3 385.0,546.7 387.0,546.7 387.0,549.4 388.5,549.4 388.5,547.1 390.0,547.1 390.0,541.4 392.0,541.4 392.0,549.6 393.5,549.6 393.5,549.4 394.5,549.4 394.5,547.2 395.5,547.2 395.5,548.8 397.5,548.8 397.5,535.5 399.0,535.5 399.0,542.5 400.5,542.5 400.5,534.1 402.0,534.1 402.0,551.3 403.5,551.3 403.5,551.7 405.5,551.7 405.5,551.4 407.0,551.4 407.0,545.2 408.0,545.2 408.0,544.3 409.0,544.3 409.0,541.2 410.5,541.2 410.5,542.6 412.0,542.6 412.0,540.6 413.0,540.6 413.0,539.9 414.0,539.9 414.0,545.3 415.5,545.3 415.5,547.6 417.0,547.6 417.0,549.3 419.0,549.3 419.0,547.2 420.0,547.2 420.0,548.2 422.0,548.2 422.0,549.5 423.0,549.5 423.0,549.1 424.0,549.1 424.0,547.6 425.5,547.6 425.5,547.9 426.5,547.9 426.5,549.1 427.5,549.1 427.5,548.1 429.5,548.1 429.5,548.9 430.5,548.9 430.5,543.5 432.0,543.5 432.0,548.7 433.5,548.7 433.5,538.3 435.5,538.3 435.5,541.6 437.5,541.6 437.5,544.6 438.5,544.6 438.5,550.1 440.5,550.1 440.5,532.6 442.5,532.6 442.5,548.2 443.5,548.2 443.5,548.0 444.5,548.0 444.5,545.2 445.5,545.2 445.5,551.9 446.5,551.9 446.5,551.8 448.0,551.8 448.0,551.2 449.0,551.2 449.0,541.9 451.0,541.9 451.0,547.3 453.0,547.3 453.0,544.0 454.5,544.0 454.5,549.2 455.5,549.2 455.5,550.2 457.5,550.2 457.5,540.5 458.5,540.5 458.5,541.5 460.5,541.5 460.5,550.4 462.5,550.4 462.5,530.0 464.0,530.0 464.0,542.4 466.0,542.4 466.0,543.2 468.0,543.2 468.0,541.8 470.0,541.8 470.0,535.9 472.0,535.9 472.0,545.2 474.0,545.2 474.0,545.9 476.0,545.9 476.0,544.8 477.0,544.8 477.0,547.9 478.5,547.9 478.5,538.2 480.0,538.2 480.0,544.5 481.5,544.5 481.5,545.8 483.0,545.8 483.0,544.6 484.0,544.6 484.0,547.3 486.0,547.3 486.0,545.2 487.0,545.2 487.0,536.0 488.0,536.0 488.0,541.7 489.0,541.7 489.0,548.0 490.0,548.0 490.0,547.7 491.0,547.7 491.0,548.1 492.5,548.1 492.5,549.4 493.5,549.4 493.5,547.2 495.0,547.2 495.0,549.3 496.0,549.3 496.0,537.2 497.0,537.2 497.0,544.9 498.5,544.9 498.5,548.0 500.5,548.0 500.5,546.4 502.0,546.4 502.0,545.4 504.0,545.4 504.0,550.0 505.0,550.0 505.0,545.1 506.5,545.1 506.5,550.6 508.5,550.6 508.5,549.4 509.5,549.4 509.5,542.9 511.5,542.9 511.5,551.5 513.5,551.5 513.5,551.8 514.5,551.8 514.5,551.3 516.5,551.3 516.5,551.5 517.5,551.5 517.5,548.7 519.0,548.7 519.0,548.6 520.0,548.6 520.0,524.0 521.0,524.0 521.0,548.4 523.0,548.4 523.0,548.4 524.0,548.4 524.0,547.7 525.5,547.7 525.5,548.1 527.5,548.1 527.5,547.5 528.5,547.5 528.5,547.9 530.0,547.9 530.0,538.1 531.0,538.1 531.0,547.7 532.0,547.7 532.0,547.3 533.0,547.3 533.0,547.1 534.0,547.1 534.0,543.6 535.5,543.6 535.5,545.3 537.5,545.3 537.5,547.2 538.5,547.2 538.5,548.2 539.5,548.2 539.5,548.1 541.0,548.1 541.0,544.4 542.0,544.4 542.0,546.6 544.0,546.6 544.0,548.9 545.0,548.9 545.0,548.2 546.5,548.2 546.5,547.6 548.0,547.6 548.0,548.5 549.0,548.5 549.0,548.1 551.0,548.1 551.0,549.5 553.0,549.5 553.0,536.7 554.0,536.7 554.0,545.9 555.0,545.9 555.0,545.0 557.0,545.0 557.0,547.3 558.0,547.3 558.0,547.8 559.5,547.8 559.5,549.7 560.5,549.7 560.5,547.6 561.5,547.6 561.5,547.3 562.5,547.3 562.5,547.3 563.5,547.3 563.5,547.8 564.5,547.8 564.5,548.9 565.5,548.9 565.5,526.1 566.5,526.1 566.5,545.1 568.5,545.1 568.5,548.1 570.0,548.1 570.0,541.8 571.0,541.8 571.0,548.2 572.5,548.2 572.5,548.0 573.5,548.0 573.5,547.7 575.0,547.7 575.0,537.9 576.0,537.9 576.0,549.2 577.0,549.2 577.0,540.3 578.0,540.3 578.0,532.7 579.0,532.7 579.0,547.9 581.0,547.9 581.0,548.2 582.5,548.2 582.5,549.4 584.0,549.4 584.0,549.2 586.0,549.2 586.0,549.2 587.5,549.2 587.5,547.7 589.5,547.7 589.5,548.1 591.0,548.1 591.0,548.3 593.0,548.3 593.0,545.4 594.5,545.4 594.5,534.8 595.5,534.8 595.5,534.6 597.5,534.6 597.5,541.8 598.5,541.8 598.5,542.5 599.5,542.5 599.5,545.7 601.0,545.7 601.0,550.8 602.0,550.8 602.0,526.1 603.0,526.1 603.0,549.4 604.0,549.4 604.0,545.8 605.0,545.8 605.0,549.5 606.5,549.5 606.5,549.3 607.5,549.3 607.5,550.7 608.5,550.7 608.5,550.5 609.5,550.5 609.5,530.5 610.5,530.5 610.5,548.2 612.0,548.2 612.0,540.4 613.5,540.4 613.5,548.7 615.5,548.7 615.5,538.8 616.5,538.8 616.5,549.0 618.0,549.0 618.0,546.8 619.0,546.8 619.0,547.2 620.5,547.2 620.5,547.4 622.5,547.4 622.5,546.0 624.5,546.0 624.5,549.2 626.5,549.2 626.5,549.5 628.0,549.5 628.0,550.8 629.0,550.8 629.0,550.7 630.5,550.7 630.5,550.1 632.5,550.1 632.5,549.9 633.5,549.9 633.5,550.7 634.5,550.7 634.5,548.0 635.5,548.0 635.5,547.9 636.5,547.9 636.5,547.7 638.5,547.7 638.5,536.2 639.5,536.2 639.5,546.4 641.0,546.4 641.0,526.4 642.0,526.4 642.0,546.4 643.5,546.4 643.5,545.2 644.5,545.2 644.5,546.1 645.5,546.1 645.5,545.0 646.5,545.0 646.5,540.0 647.5,540.0 647.5,543.4 648.5,543.4 648.5,541.5 650.5,541.5 650.5,541.0 652.0,541.0 652.0,536.0 653.0,536.0 653.0,543.4 654.5,543.4 654.5,549.3 655.5,549.3 655.5,549.3 657.0,549.3 657.0,550.5 658.0,550.5 658.0,549.5 659.5,549.5 659.5,546.8 661.0,546.8 661.0,545.4 662.0,545.4 662.0,546.1 664.0,546.1 664.0,548.8 665.0,548.8 665.0,548.6 667.0,548.6 667.0,548.5 668.5,548.5 668.5,531.2 670.5,531.2 670.5,547.8 672.5,547.8 672.5,546.7 673.5,546.7 673.5,545.9 675.0,545.9 675.0,548.0 676.5,548.0 676.5,544.8 678.5,544.8 678.5,546.9 680.5,546.9 680.5,547.1 681.5,547.1 681.5,546.0 683.0,546.0 683.0,545.0 684.0,545.0 684.0,547.8 685.5,547.8 685.5,539.1 687.5,539.1 687.5,547.5 688.5,547.5 688.5,546.9 690.0,546.9 690.0,551.6 691.0,551.6 691.0,551.3 692.5,551.3 692.5,547.3 693.5,547.3 693.5,551.5 694.5,551.5 694.5,551.7 695.5,551.7 695.5,551.2 696.5,551.2 696.5,551.6 698.0,551.6 698.0,544.4 699.5,544.4 699.5,534.4 701.5,534.4 701.5,542.9 703.5,542.9 703.5,544.2 704.5,544.2 704.5,546.0 705.5,546.0 705.5,536.8 706.5,536.8 706.5,545.3 708.0,545.3 708.0,545.7 709.5,545.7 709.5,546.7 711.0,546.7 711.0,544.9 712.5,544.9 712.5,544.7 714.5,544.7 714.5,545.6 716.0,545.6 716.0,542.1 718.0,542.1 718.0,534.9 719.0,534.9 719.0,543.1 720.0,543.1 720.0,550.7 721.0,550.7 721.0,549.4 722.5,549.4 722.5,549.5 724.0,549.5 724.0,549.7 726.0,549.7 726.0,546.4 727.0,546.4 727.0,547.1 729.0,547.1 729.0,548.0 731.0,548.0 731.0,549.9 733.0,549.9 733.0,549.5 734.0,549.5 734.0,549.8 736.0,549.8 736.0,550.2 737.0,550.2 737.0,550.4 738.5,550.4 738.5,551.7 740.5,551.7 740.5,551.7 742.0,551.7 742.0,551.9 744.0,551.9 744.0,551.3 745.0,551.3 745.0,551.4 746.5,551.4 746.5,544.2 748.5,544.2 748.5,542.4 750.0,542.4 750.0,542.3 752.0,542.3 752.0,547.6 753.5,547.6 753.5,546.9 755.0,546.9 755.0,547.7 756.5,547.7 756.5,543.5 757.5,543.5 757.5,542.6 758.5,542.6 758.5,551.6 760.0,551.6 760.0,546.4 761.5,546.4 761.5,551.8 762.5,551.8 762.5,545.8 763.5,545.8 763.5,551.3 764.5,551.3 764.5,537.3 766.0,537.3 766.0,546.2 767.0,546.2 767.0,538.2 769.0,538.2 769.0,543.4 770.0,543.4 770.0,543.6 772.0,543.6 772.0,535.0 773.0,535.0 773.0,543.1 774.0,543.1 774.0,545.4 775.5,545.4 775.5,535.1 777.5,535.1 777.5,545.7 779.5,545.7 779.5,545.7 780.5,545.7 780.5,547.9 782.0,547.9 782.0,547.4 783.0,547.4 783.0,551.4 784.0,551.4 784.0,543.9 785.0,543.9 785.0,540.6 787.0,540.6 787.0,551.5 788.0,551.5 788.0,541.3 789.0,541.3 789.0,543.5 790.5,543.5 790.5,539.9 792.0,539.9 792.0,541.3 793.0,541.3 793.0,541.7 794.1,541.7 794.1,552.6" fill="#a0acf0"/><polygon points="797.3,552.6 797.3,550.7 798.8,550.7 798.8,540.0 799.8,540.0 799.8,550.9 800.8,550.9 800.8,543.4 802.3,543.4 802.3,550.9 803.3,550.9 803.3,550.5 804.8,550.5 804.8,550.8 806.3,550.8 806.3,550.4 807.3,550.4 807.3,548.0 808.3,548.0 808.3,544.9 809.3,544.9 809.3,546.5 810.3,546.5 810.3,544.2 811.3,544.2 811.3,547.8 813.3,547.8 813.3,546.0 814.3,546.0 814.3,544.2 815.3,544.2 815.3,547.5 817.3,547.5 817.3,543.5 818.3,543.5 818.3,546.4 819.3,546.4 819.3,550.7 820.3,550.7 820.3,550.2 822.3,550.2 822.3,551.9 824.3,551.9 824.3,551.5 825.3,551.5 825.3,551.5 827.3,551.5 827.3,551.7 828.3,551.7 828.3,552.0 829.3,552.0 829.3,545.9 831.3,545.9 831.3,548.7 832.8,548.7 832.8,541.1 833.8,541.1 833.8,548.1 834.8,548.1 834.8,548.2 835.8,548.2 835.8,539.6 836.8,539.6 836.8,542.5 837.8,542.5 837.8,543.7 839.8,543.7 839.8,545.7 840.8,545.7 840.8,543.2 841.8,543.2 841.8,549.9 842.8,549.9 842.8,547.9 844.8,547.9 844.8,541.2 846.8,541.2 846.8,548.0 848.8,548.0 848.8,548.0 849.8,548.0 849.8,550.0 850.8,550.0 850.8,550.1 852.3,550.1 852.3,544.2 854.3,544.2 854.3,532.5 855.3,532.5 855.3,546.3 856.3,546.3 856.3,546.9 858.3,546.9 858.3,545.7 860.3,545.7 860.3,538.7 861.3,538.7 861.3,543.0 862.8,543.0 862.8,540.7 863.8,540.7 863.8,545.0 865.3,545.0 865.3,535.9 866.3,535.9 866.3,543.9 867.3,543.9 867.3,540.8 868.3,540.8 868.3,542.0 869.3,542.0 869.3,527.2 870.3,527.2 870.3,547.4 871.8,547.4 871.8,548.1 872.8,548.1 872.8,539.5 874.3,539.5 874.3,546.6 875.3,546.6 875.3,543.6 876.3,543.6 876.3,542.3 877.3,542.3 877.3,547.0 878.3,547.0 878.3,545.5 879.8,545.5 879.8,547.2 881.8,547.2 881.8,547.7 882.8,547.7 882.8,551.6 883.8,551.6 883.8,551.6 884.8,551.6 884.8,551.4 886.3,551.4 886.3,551.7 887.3,551.7 887.3,551.8 889.3,551.8 889.3,545.4 890.3,545.4 890.3,549.9 891.3,549.9 891.3,550.3 892.3,550.3 892.3,550.0 894.3,550.0 894.3,549.9 895.8,549.9 895.8,551.0 897.3,551.0 897.3,543.8 898.3,543.8 898.3,545.5 899.3,545.5 899.3,545.2 900.3,545.2 900.3,536.1 901.3,536.1 901.3,546.4 902.3,546.4 902.3,546.7 903.3,546.7 903.3,535.6 904.8,535.6 904.8,548.0 905.8,548.0 905.8,548.0 906.8,548.0 906.8,546.8 907.8,546.8 907.8,547.1 908.8,547.1 908.8,550.7 909.8,550.7 909.8,550.2 910.8,550.2 910.8,549.8 911.8,549.8 911.8,550.7 912.8,550.7 912.8,550.7 914.3,550.7 914.3,547.1 915.3,547.1 915.3,546.5 916.3,546.5 916.3,544.1 918.3,544.1 918.3,544.5 919.3,544.5 919.3,544.2 920.8,544.2 920.8,550.0 922.8,550.0 922.8,549.6 924.3,549.6 924.3,549.4 925.8,549.4 925.8,542.4 926.8,542.4 926.8,549.8 928.3,549.8 928.3,550.5 929.3,550.5 929.3,550.2 931.3,550.2 931.3,550.2 932.8,550.2 932.8,546.9 933.8,546.9 933.8,537.0 935.3,537.0 935.3,543.0 936.3,543.0 936.3,545.6 937.3,545.6 937.3,540.6 938.3,540.6 938.3,543.2 940.3,543.2 940.3,543.3 941.3,543.3 941.3,544.0 942.8,544.0 942.8,548.3 943.8,548.3 943.8,549.9 944.8,549.9 944.8,549.2 945.8,549.2 945.8,548.6 946.8,548.6 946.8,543.9 947.8,543.9 947.8,544.8 948.8,544.8 948.8,544.1 950.8,544.1 950.8,541.0 951.8,541.0 951.8,542.4 952.8,542.4 952.8,541.0 954.3,541.0 954.3,541.5 956.3,541.5 956.3,550.5 958.3,550.5 958.3,550.8 960.3,550.8 960.3,550.2 962.3,550.2 962.3,550.3 963.8,550.3 963.8,537.7 964.8,537.7 964.8,543.5 965.8,543.5 965.8,541.4 967.8,541.4 967.8,544.3 968.8,544.3 968.8,544.2 969.8,544.2 969.8,546.7 970.8,546.7 970.8,548.3 971.8,548.3 971.8,548.5 973.3,548.5 973.3,548.0 974.3,548.0 974.3,544.4 975.8,544.4 975.8,546.2 977.3,546.2 977.3,542.8 978.3,542.8 978.3,544.2 979.3,544.2 979.3,546.6 980.3,546.6 980.3,542.2 981.8,542.2 981.8,544.6 982.8,544.6 982.8,538.7 983.8,538.7 983.8,548.2 985.3,548.2 985.3,549.7 986.3,549.7 986.3,548.7 988.3,548.7 988.3,548.3 990.3,548.3 990.3,548.4 992.3,548.4 992.3,548.8 994.3,548.8 994.3,547.2 995.3,547.2 995.3,547.1 996.3,547.1 996.3,547.6 997.3,547.6 997.3,549.3 998.3,549.3 998.3,547.0 999.8,547.0 999.8,547.6 1001.3,547.6 1001.3,548.4 1002.3,548.4 1002.3,548.1 1003.3,548.1 1003.3,548.0 1005.3,548.0 1005.3,547.3 1006.3,547.3 1006.3,548.2 1007.8,548.2 1007.8,547.4 1008.8,547.4 1008.8,548.8 1010.3,548.8 1010.3,548.6 1011.8,548.6 1011.8,546.0 1012.8,546.0 1012.8,545.7 1014.3,545.7 1014.3,546.8 1015.8,546.8 1015.8,546.7 1017.3,546.7 1017.3,547.3 1018.3,547.3 1018.3,546.5 1019.3,546.5 1019.3,544.0 1020.8,544.0 1020.8,542.1 1022.8,542.1 1022.8,543.1 1023.8,543.1 1023.8,543.8 1024.8,543.8 1024.8,546.5 1025.8,546.5 1025.8,541.2 1026.8,541.2 1026.8,528.2 1028.3,528.2 1028.3,545.2 1030.3,545.2 1030.3,539.3 1031.3,539.3 1031.3,545.1 1033.3,545.1 1033.3,542.8 1034.8,542.8 1034.8,549.2 1035.8,549.2 1035.8,545.0 1037.3,545.0 1037.3,548.0 1039.3,548.0 1039.3,548.9 1040.8,548.9 1040.8,549.1 1041.8,549.1 1041.8,548.5 1043.8,548.5 1043.8,548.4 1044.8,548.4 1044.8,549.7 1045.8,549.7 1045.8,549.4 1046.8,549.4 1046.8,534.5 1048.3,534.5 1048.3,549.0 1050.3,549.0 1050.3,548.4 1051.3,548.4 1051.3,548.5 1052.8,548.5 1052.8,551.5 1053.8,551.5 1053.8,551.4 1055.8,551.4 1055.8,551.8 1056.8,551.8 1056.8,543.9 1058.3,543.9 1058.3,545.8 1059.8,545.8 1059.8,551.6 1061.3,551.6 1061.3,544.5 1062.3,544.5 1062.3,542.6 1063.8,542.6 1063.8,542.3 1065.3,542.3 1065.3,544.5 1067.3,544.5 1067.3,545.0 1068.8,545.0 1068.8,546.8 1070.3,546.8 1070.3,547.1 1071.3,547.1 1071.3,544.3 1073.3,544.3 1073.3,551.6 1075.3,551.6 1075.3,551.8 1076.3,551.8 1076.3,552.0 1077.3,552.0 1077.3,552.0 1079.3,552.0 1079.3,551.7 1080.3,551.7 1080.3,551.8 1081.3,551.8 1081.3,551.6 1082.3,551.6 1082.3,551.6 1083.3,551.6 1083.3,551.5 1084.8,551.5 1084.8,544.2 1085.8,544.2 1085.8,551.7 1087.8,551.7 1087.8,552.0 1089.3,552.0 1089.3,551.6 1091.3,551.6 1091.3,548.0 1092.3,548.0 1092.3,547.4 1094.3,547.4 1094.3,551.5 1095.3,551.5 1095.3,547.3 1097.3,547.3 1097.3,545.6 1099.3,545.6 1099.3,544.6 1100.8,544.6 1100.8,539.9 1101.8,539.9 1101.8,545.7 1102.8,545.7 1102.8,544.7 1103.8,544.7 1103.8,547.3 1104.8,547.3 1104.8,545.8 1106.3,545.8 1106.3,543.0 1107.3,543.0 1107.3,547.3 1108.8,547.3 1108.8,546.4 1110.3,546.4 1110.3,542.5 1111.8,542.5 1111.8,550.0 1112.8,550.0 1112.8,549.0 1113.8,549.0 1113.8,540.9 1115.3,540.9 1115.3,548.7 1116.8,548.7 1116.8,544.7 1118.3,544.7 1118.3,550.7 1120.3,550.7 1120.3,551.0 1121.3,551.0 1121.3,550.2 1122.8,550.2 1122.8,550.9 1124.8,550.9 1124.8,546.6 1125.8,546.6 1125.8,549.6 1126.8,549.6 1126.8,550.2 1128.3,550.2 1128.3,538.0 1129.8,538.0 1129.8,547.9 1130.8,547.9 1130.8,548.5 1132.3,548.5 1132.3,549.5 1134.3,549.5 1134.3,549.2 1135.3,549.2 1135.3,549.5 1136.3,549.5 1136.3,549.3 1137.3,549.3 1137.3,549.7 1138.8,549.7 1138.8,547.8 1140.8,547.8 1140.8,549.9 1142.8,549.9 1142.8,551.7 1144.8,551.7 1144.8,551.5 1145.8,551.5 1145.8,551.9 1146.8,551.9 1146.8,551.5 1147.8,551.5 1147.8,551.6 1149.3,551.6 1149.3,551.6 1150.8,551.6 1150.8,535.0 1152.3,535.0 1152.3,546.6 1153.8,546.6 1153.8,547.4 1154.8,547.4 1154.8,545.9 1156.8,545.9 1156.8,546.8 1158.3,546.8 1158.3,548.3 1159.3,548.3 1159.3,549.9 1161.3,549.9 1161.3,543.3 1162.3,543.3 1162.3,548.9 1163.3,548.9 1163.3,548.7 1164.3,548.7 1164.3,548.0 1165.3,548.0 1165.3,549.2 1167.3,549.2 1167.3,549.1 1168.3,549.1 1168.3,549.4 1169.8,549.4 1169.8,548.1 1171.3,548.1 1171.3,543.1 1172.3,543.1 1172.3,543.4 1173.3,543.4 1173.3,524.1 1174.3,524.1 1174.3,536.5 1175.8,536.5 1175.8,549.5 1177.8,549.5 1177.8,544.6 1179.8,544.6 1179.8,543.9 1180.8,543.9 1180.8,549.9 1182.8,549.9 1182.8,541.9 1183.8,541.9 1183.8,549.7 1185.3,549.7 1185.3,547.7 1186.3,547.7 1186.3,545.5 1188.3,545.5 1188.3,546.0 1189.8,546.0 1189.8,545.6 1190.8,545.6 1190.8,548.5 1192.3,548.5 1192.3,545.8 1193.3,545.8 1193.3,547.5 1194.3,547.5 1194.3,551.8 1195.3,551.8 1195.3,551.9 1197.3,551.9 1197.3,551.6 1199.3,551.6 1199.3,544.2 1200.3,544.2 1200.3,551.7 1201.3,551.7 1201.3,552.0 1202.8,552.0 1202.8,551.7 1204.3,551.7 1204.3,537.8 1205.3,537.8 1205.3,546.3 1207.3,546.3 1207.3,546.9 1208.3,546.9 1208.3,532.5 1209.3,532.5 1209.3,548.0 1210.3,548.0 1210.3,545.8 1211.3,545.8 1211.3,541.2 1212.3,541.2 1212.3,546.5 1213.3,546.5 1213.3,538.8 1214.3,538.8 1214.3,547.5 1216.3,547.5 1216.3,546.2 1218.3,546.2 1218.3,547.0 1219.3,547.0 1219.3,546.5 1220.3,546.5 1220.3,547.7 1222.3,547.7 1222.3,552.6" fill="#a0acf0"/><polygon points="1225.8,552.6 1225.8,547.7 1227.3,547.7 1227.3,548.6 1228.8,548.6 1228.8,543.0 1229.8,543.0 1229.8,542.7 1230.8,542.7 1230.8,548.5 1232.8,548.5 1232.8,544.6 1233.8,544.6 1233.8,540.2 1235.3,540.2 1235.3,536.5 1236.3,536.5 1236.3,541.6 1237.3,541.6 1237.3,540.1 1239.3,540.1 1239.3,540.7 1241.3,540.7 1241.3,542.9 1242.8,542.9 1242.8,540.4 1244.3,540.4 1244.3,546.6 1245.3,546.6 1245.3,545.5 1247.3,545.5 1247.3,545.1 1248.3,545.1 1248.3,547.9 1249.3,547.9 1249.3,546.0 1251.3,546.0 1251.3,544.7 1252.3,544.7 1252.3,547.6 1253.8,547.6 1253.8,548.4 1255.3,548.4 1255.3,549.8 1256.3,549.8 1256.3,548.8 1257.3,548.8 1257.3,548.5 1258.3,548.5 1258.3,547.8 1259.3,547.8 1259.3,548.0 1260.3,548.0 1260.3,545.6 1261.8,545.6 1261.8,546.9 1263.8,546.9 1263.8,546.5 1264.8,546.5 1264.8,546.5 1265.8,546.5 1265.8,547.0 1267.3,547.0 1267.3,547.3 1268.3,547.3 1268.3,547.2 1269.3,547.2 1269.3,547.7 1270.3,547.7 1270.3,548.4 1271.3,548.4 1271.3,548.5 1272.3,548.5 1272.3,547.4 1273.3,547.4 1273.3,547.5 1275.3,547.5 1275.3,543.1 1276.3,543.1 1276.3,545.2 1278.3,545.2 1278.3,544.9 1279.3,544.9 1279.3,538.1 1280.0,538.1 1280.0,552.6" fill="#a0acf0"/><circle cx="71" cy="530" r="8.700" fill="#08080a"/><polygon points="71.00,525.30 72.38,528.40 75.76,528.75 73.23,531.03 73.94,534.35 71.00,532.65 68.06,534.35 68.77,531.03 66.24,528.75 69.62,528.40" fill="#fff" stroke="#fff" stroke-width="1" stroke-linejoin="round"/><circle cx="144.5" cy="478.6" r="8.700" fill="#08080a"/><polygon points="144.50,473.90 145.88,477.00 149.26,477.35 146.73,479.63 147.44,482.95 144.50,481.25 141.56,482.95 142.27,479.63 139.74,477.35 143.12,477.00" fill="#fff" stroke="#fff" stroke-width="1" stroke-linejoin="round"/><circle cx="144.5" cy="530" r="8.700" fill="#08080a"/><polygon points="144.50,525.30 145.88,528.40 149.26,528.75 146.73,531.03 147.44,534.35 144.50,532.65 141.56,534.35 142.27,531.03 139.74,528.75 143.12,528.40" fill="#fff" stroke="#fff" stroke-width="1" stroke-linejoin="round"/><circle cx="260" cy="478.6" r="8.700" fill="#08080a"/><polygon points="260.00,473.90 261.38,477.00 264.76,477.35 262.23,479.63 262.94,482.95 260.00,481.25 257.06,482.95 257.77,479.63 255.24,477.35 258.62,477.00" fill="#fff" stroke="#fff" stroke-width="1" stroke-linejoin="round"/><circle cx="260" cy="530" r="8.700" fill="#08080a"/><polygon points="260.00,525.30 261.38,528.40 264.76,528.75 262.23,531.03 262.94,534.35 260.00,532.65 257.06,534.35 257.77,531.03 255.24,528.75 258.62,528.40" fill="#fff" stroke="#fff" stroke-width="1" stroke-linejoin="round"/><circle cx="331" cy="530.2" r="8.700" fill="#08080a"/><polygon points="331.00,525.50 332.38,528.60 335.76,528.95 333.23,531.23 333.94,534.55 331.00,532.85 328.06,534.55 328.77,531.23 326.24,528.95 329.62,528.60" fill="#fff" stroke="#fff" stroke-width="1" stroke-linejoin="round"/><circle cx="809.5" cy="530.2" r="8.700" fill="#08080a"/><polygon points="809.50,525.50 810.88,528.60 814.26,528.95 811.73,531.23 812.44,534.55 809.50,532.85 806.56,534.55 807.27,531.23 804.74,528.95 808.12,528.60" fill="#fff" stroke="#fff" stroke-width="1" stroke-linejoin="round"/><circle cx="1237" cy="530.2" r="8.700" fill="#08080a"/><polygon points="1237.00,525.50 1238.38,528.60 1241.76,528.95 1239.23,531.23 1239.94,534.55 1237.00,532.85 1234.06,534.55 1234.77,531.23 1232.24,528.95 1235.62,528.60" fill="#fff" stroke="#fff" stroke-width="1" stroke-linejoin="round"/></svg>
<div class="a" style="left:161.200px;top:569.800px;width:17.200px;height:37px;border-radius:6px;background:#0f978b;overflow:hidden"><svg class="a" style="left:0;top:0" width="17" height="37"><polygon points="1,37 1,20 2,20 2,10 3,10 3,16 4,16 4,22 5,22 5,14 6,14 6,26 7,26 7,30 9,30 9,33 12,33 12,35 16,35 16,37" fill="#7fe8d8"/></svg><div class="a" style="left:10.500px;top:13.500px;font-family:'DejaVu Sans',sans-serif;font-size:10px;line-height:11px;color:#e8fffa;transform:scaleX(.8);transform-origin:0 50%">E</div></div>
<div class="a" style="left:58px;top:608.600px;width:1230px;height:30px;border-radius:6px;background:#00a796"></div>
<svg class="a" style="left:0;top:608px" width="1280" height="23" viewBox="0 608 1280 23" fill="#5ce8d4"><rect x="150.0" y="628.6" width="1.200" height="2.4"/><rect x="157.0" y="620.2" width="1.200" height="10.8"/><rect x="160.0" y="628.2" width="1.200" height="2.8"/><rect x="162.0" y="628.3" width="1.200" height="2.7"/><rect x="167.0" y="629.1" width="1.200" height="1.9"/><rect x="169.0" y="629.5" width="1.200" height="1.5"/><rect x="172.0" y="628.6" width="1.200" height="2.4"/><rect x="175.0" y="630.3" width="1.200" height="0.7"/><rect x="182.0" y="630.2" width="1.200" height="0.8"/><rect x="184.0" y="630.5" width="1.200" height="0.5"/><rect x="187.0" y="630.1" width="1.200" height="0.9"/><rect x="190.0" y="623.2" width="1.200" height="7.8"/><rect x="197.0" y="628.9" width="1.200" height="2.1"/><rect x="200.0" y="628.8" width="1.200" height="2.2"/><rect x="205.0" y="626.2" width="1.200" height="4.8"/><rect x="208.0" y="629.8" width="1.200" height="1.2"/><rect x="212.0" y="625.0" width="1.200" height="6.0"/><rect x="214.0" y="628.7" width="1.200" height="2.3"/><rect x="216.0" y="623.9" width="1.200" height="7.1"/><rect x="221.0" y="630.0" width="1.200" height="1.0"/><rect x="226.0" y="630.4" width="1.200" height="0.6"/><rect x="228.0" y="629.6" width="1.200" height="1.4"/><rect x="233.0" y="618.3" width="1.200" height="12.7"/><rect x="237.0" y="628.4" width="1.200" height="2.6"/><rect x="242.0" y="621.9" width="1.200" height="9.1"/><rect x="245.0" y="626.8" width="1.200" height="4.2"/><rect x="250.0" y="626.2" width="1.200" height="4.8"/><rect x="257.0" y="625.7" width="1.200" height="5.3"/><rect x="264.0" y="628.5" width="1.200" height="2.5"/><rect x="268.0" y="617.3" width="1.200" height="13.7"/><rect x="270.0" y="625.4" width="1.200" height="5.6"/><rect x="274.0" y="629.7" width="1.200" height="1.3"/><rect x="281.0" y="624.6" width="1.200" height="6.4"/><rect x="285.0" y="627.6" width="1.200" height="3.4"/><rect x="288.0" y="629.7" width="1.200" height="1.3"/><rect x="293.0" y="627.8" width="1.200" height="3.2"/><rect x="300.0" y="629.5" width="1.200" height="1.5"/><rect x="303.0" y="629.6" width="1.200" height="1.4"/><rect x="307.0" y="629.4" width="1.200" height="1.6"/><rect x="309.0" y="628.9" width="1.200" height="2.1"/><rect x="314.0" y="627.0" width="1.200" height="4.0"/><rect x="321.0" y="628.9" width="1.200" height="2.1"/><rect x="326.0" y="625.8" width="1.200" height="5.2"/><rect x="329.0" y="620.5" width="1.200" height="10.5"/><rect x="332.0" y="628.0" width="1.200" height="3.0"/><rect x="335.0" y="629.4" width="1.200" height="1.6"/><rect x="340.0" y="629.7" width="1.200" height="1.3"/><rect x="344.0" y="626.0" width="1.200" height="5.0"/><rect x="347.0" y="623.9" width="1.200" height="7.1"/><rect x="354.0" y="628.9" width="1.200" height="2.1"/><rect x="359.0" y="630.0" width="1.200" height="1.0"/><rect x="364.0" y="624.1" width="1.200" height="6.9"/><rect x="371.0" y="628.5" width="1.200" height="2.5"/><rect x="375.0" y="628.8" width="1.200" height="2.2"/><rect x="379.0" y="628.7" width="1.200" height="2.3"/><rect x="383.0" y="629.8" width="1.200" height="1.2"/><rect x="387.0" y="629.6" width="1.200" height="1.4"/><rect x="390.0" y="630.5" width="1.200" height="0.5"/><rect x="397.0" y="629.7" width="1.200" height="1.3"/><rect x="401.0" y="628.5" width="1.200" height="2.5"/><rect x="405.0" y="624.8" width="1.200" height="6.2"/><rect x="410.0" y="628.4" width="1.200" height="2.6"/><rect x="415.0" y="628.1" width="1.200" height="2.9"/><rect x="422.0" y="623.1" width="1.200" height="7.9"/><rect x="425.0" y="628.2" width="1.200" height="2.8"/><rect x="430.0" y="627.6" width="1.200" height="3.4"/><rect x="435.0" y="624.1" width="1.200" height="6.9"/><rect x="442.0" y="628.2" width="1.200" height="2.8"/><rect x="446.0" y="628.6" width="1.200" height="2.4"/><rect x="450.0" y="630.4" width="1.200" height="0.6"/><rect x="453.0" y="628.9" width="1.200" height="2.1"/><rect x="456.0" y="624.6" width="1.200" height="6.4"/><rect x="458.0" y="628.1" width="1.200" height="2.9"/><rect x="461.0" y="622.2" width="1.200" height="8.8"/><rect x="465.0" y="629.3" width="1.200" height="1.7"/><rect x="472.0" y="620.2" width="1.200" height="10.8"/><rect x="477.0" y="630.3" width="1.200" height="0.7"/><rect x="480.0" y="623.5" width="1.200" height="7.5"/><rect x="482.0" y="628.1" width="1.200" height="2.9"/><rect x="487.0" y="628.8" width="1.200" height="2.2"/><rect x="494.0" y="630.4" width="1.200" height="0.6"/><rect x="501.0" y="626.5" width="1.200" height="4.5"/><rect x="508.0" y="625.1" width="1.200" height="5.9"/><rect x="512.0" y="629.5" width="1.200" height="1.5"/><rect x="519.0" y="629.6" width="1.200" height="1.4"/><rect x="522.0" y="626.1" width="1.200" height="4.9"/><rect x="527.0" y="628.1" width="1.200" height="2.9"/><rect x="534.0" y="623.9" width="1.200" height="7.1"/><rect x="536.0" y="629.7" width="1.200" height="1.3"/><rect x="543.0" y="629.7" width="1.200" height="1.3"/><rect x="550.0" y="629.4" width="1.200" height="1.6"/><rect x="553.0" y="629.3" width="1.200" height="1.7"/><rect x="558.0" y="628.4" width="1.200" height="2.6"/><rect x="561.0" y="629.9" width="1.200" height="1.1"/><rect x="565.0" y="629.5" width="1.200" height="1.5"/><rect x="569.0" y="629.7" width="1.200" height="1.3"/><rect x="573.0" y="627.9" width="1.200" height="3.1"/><rect x="580.0" y="629.9" width="1.200" height="1.1"/><rect x="582.0" y="628.4" width="1.200" height="2.6"/><rect x="584.0" y="629.1" width="1.200" height="1.9"/><rect x="587.0" y="628.5" width="1.200" height="2.5"/><rect x="590.0" y="628.4" width="1.200" height="2.6"/><rect x="594.0" y="625.0" width="1.200" height="6.0"/><rect x="599.0" y="628.3" width="1.200" height="2.7"/><rect x="601.0" y="622.2" width="1.200" height="8.8"/><rect x="605.0" y="629.7" width="1.200" height="1.3"/><rect x="609.0" y="630.4" width="1.200" height="0.6"/><rect x="613.0" y="628.6" width="1.200" height="2.4"/><rect x="620.0" y="628.0" width="1.200" height="3.0"/><rect x="627.0" y="628.2" width="1.200" height="2.8"/><rect x="634.0" y="625.9" width="1.200" height="5.1"/><rect x="639.0" y="628.8" width="1.200" height="2.2"/><rect x="644.0" y="628.4" width="1.200" height="2.6"/><rect x="649.0" y="628.4" width="1.200" height="2.6"/><rect x="652.0" y="629.3" width="1.200" height="1.7"/><rect x="654.0" y="628.0" width="1.200" height="3.0"/><rect x="659.0" y="628.9" width="1.200" height="2.1"/><rect x="664.0" y="630.1" width="1.200" height="0.9"/><rect x="669.0" y="628.3" width="1.200" height="2.7"/><rect x="673.0" y="629.4" width="1.200" height="1.6"/><rect x="680.0" y="630.3" width="1.200" height="0.7"/><rect x="683.0" y="627.6" width="1.200" height="3.4"/><rect x="685.0" y="630.4" width="1.200" height="0.6"/><rect x="690.0" y="628.0" width="1.200" height="3.0"/><rect x="695.0" y="617.9" width="1.200" height="13.1"/><rect x="698.0" y="628.4" width="1.200" height="2.6"/><rect x="700.0" y="630.2" width="1.200" height="0.8"/><rect x="704.0" y="629.4" width="1.200" height="1.6"/><rect x="707.0" y="629.5" width="1.200" height="1.5"/><rect x="710.0" y="621.7" width="1.200" height="9.3"/><rect x="717.0" y="626.1" width="1.200" height="4.9"/><rect x="719.0" y="625.1" width="1.200" height="5.9"/><rect x="721.0" y="628.3" width="1.200" height="2.7"/><rect x="724.0" y="622.5" width="1.200" height="8.5"/><rect x="731.0" y="629.6" width="1.200" height="1.4"/><rect x="735.0" y="630.2" width="1.200" height="0.8"/><rect x="739.0" y="624.8" width="1.200" height="6.2"/><rect x="746.0" y="623.3" width="1.200" height="7.7"/><rect x="753.0" y="629.8" width="1.200" height="1.2"/><rect x="760.0" y="623.8" width="1.200" height="7.2"/><rect x="764.0" y="630.2" width="1.200" height="0.8"/><rect x="767.0" y="629.4" width="1.200" height="1.6"/><rect x="772.0" y="624.4" width="1.200" height="6.6"/><rect x="776.0" y="624.7" width="1.200" height="6.3"/><rect x="778.0" y="629.2" width="1.200" height="1.8"/><rect x="783.0" y="623.6" width="1.200" height="7.4"/><rect x="788.0" y="630.2" width="1.200" height="0.8"/><rect x="795.0" y="618.6" width="1.200" height="12.4"/><rect x="797.0" y="628.1" width="1.200" height="2.9"/><rect x="802.0" y="629.9" width="1.200" height="1.1"/><rect x="804.0" y="623.4" width="1.200" height="7.6"/><rect x="809.0" y="630.2" width="1.200" height="0.8"/><rect x="816.0" y="628.4" width="1.200" height="2.6"/><rect x="820.0" y="624.9" width="1.200" height="6.1"/><rect x="824.0" y="629.6" width="1.200" height="1.4"/><rect x="828.0" y="628.5" width="1.200" height="2.5"/><rect x="833.0" y="629.6" width="1.200" height="1.4"/><rect x="835.0" y="629.1" width="1.200" height="1.9"/><rect x="838.0" y="630.3" width="1.200" height="0.7"/><rect x="840.0" y="627.0" width="1.200" height="4.0"/><rect x="845.0" y="629.3" width="1.200" height="1.7"/><rect x="849.0" y="620.2" width="1.200" height="10.8"/><rect x="856.0" y="629.7" width="1.200" height="1.3"/><rect x="861.0" y="627.2" width="1.200" height="3.8"/><rect x="864.0" y="617.8" width="1.200" height="13.2"/><rect x="869.0" y="626.7" width="1.200" height="4.3"/><rect x="873.0" y="628.6" width="1.200" height="2.4"/><rect x="876.0" y="617.6" width="1.200" height="13.4"/><rect x="880.0" y="629.6" width="1.200" height="1.4"/><rect x="882.0" y="628.8" width="1.200" height="2.2"/><rect x="887.0" y="630.1" width="1.200" height="0.9"/><rect x="891.0" y="624.6" width="1.200" height="6.4"/><rect x="894.0" y="618.7" width="1.200" height="12.3"/><rect x="901.0" y="627.6" width="1.200" height="3.4"/><rect x="906.0" y="628.7" width="1.200" height="2.3"/><rect x="910.0" y="626.2" width="1.200" height="4.8"/><rect x="912.0" y="628.7" width="1.200" height="2.3"/><rect x="915.0" y="630.1" width="1.200" height="0.9"/><rect x="918.0" y="628.9" width="1.200" height="2.1"/><rect x="923.0" y="629.8" width="1.200" height="1.2"/><rect x="928.0" y="618.3" width="1.200" height="12.7"/><rect x="933.0" y="627.8" width="1.200" height="3.2"/><rect x="940.0" y="628.2" width="1.200" height="2.8"/><rect x="942.0" y="624.0" width="1.200" height="7.0"/><rect x="944.0" y="630.4" width="1.200" height="0.6"/><rect x="947.0" y="629.3" width="1.200" height="1.7"/><rect x="949.0" y="618.0" width="1.200" height="13.0"/><rect x="954.0" y="627.7" width="1.200" height="3.3"/><rect x="956.0" y="630.0" width="1.200" height="1.0"/><rect x="963.0" y="630.0" width="1.200" height="1.0"/><rect x="966.0" y="626.4" width="1.200" height="4.6"/><rect x="968.0" y="623.1" width="1.200" height="7.9"/><rect x="971.0" y="628.4" width="1.200" height="2.6"/><rect x="974.0" y="629.4" width="1.200" height="1.6"/><rect x="978.0" y="629.1" width="1.200" height="1.9"/><rect x="983.0" y="630.2" width="1.200" height="0.8"/><rect x="985.0" y="629.7" width="1.200" height="1.3"/><rect x="990.0" y="628.0" width="1.200" height="3.0"/><rect x="997.0" y="626.4" width="1.200" height="4.6"/><rect x="999.0" y="629.8" width="1.200" height="1.2"/><rect x="1004.0" y="627.4" width="1.200" height="3.6"/><rect x="1006.0" y="628.8" width="1.200" height="2.2"/><rect x="1011.0" y="628.8" width="1.200" height="2.2"/><rect x="1015.0" y="618.8" width="1.200" height="12.2"/><rect x="1017.0" y="628.5" width="1.200" height="2.5"/><rect x="1021.0" y="630.3" width="1.200" height="0.7"/><rect x="1025.0" y="628.6" width="1.200" height="2.4"/><rect x="1027.0" y="628.9" width="1.200" height="2.1"/><rect x="1030.0" y="629.4" width="1.200" height="1.6"/><rect x="1032.0" y="628.7" width="1.200" height="2.3"/><rect x="1036.0" y="624.0" width="1.200" height="7.0"/><rect x="1043.0" y="627.7" width="1.200" height="3.3"/><rect x="1046.0" y="625.5" width="1.200" height="5.5"/><rect x="1050.0" y="627.7" width="1.200" height="3.3"/><rect x="1057.0" y="622.3" width="1.200" height="8.7"/><rect x="1060.0" y="629.4" width="1.200" height="1.6"/><rect x="1064.0" y="629.0" width="1.200" height="2.0"/><rect x="1067.0" y="630.2" width="1.200" height="0.8"/><rect x="1070.0" y="627.9" width="1.200" height="3.1"/><rect x="1077.0" y="630.1" width="1.200" height="0.9"/><rect x="1079.0" y="625.0" width="1.200" height="6.0"/><rect x="1082.0" y="628.2" width="1.200" height="2.8"/><rect x="1087.0" y="626.4" width="1.200" height="4.6"/><rect x="1090.0" y="629.4" width="1.200" height="1.6"/><rect x="1095.0" y="619.0" width="1.200" height="12.0"/><rect x="1098.0" y="628.1" width="1.200" height="2.9"/><rect x="1105.0" y="622.2" width="1.200" height="8.8"/><rect x="1110.0" y="630.0" width="1.200" height="1.0"/><rect x="1112.0" y="619.5" width="1.200" height="11.5"/><rect x="1117.0" y="629.6" width="1.200" height="1.4"/><rect x="1122.0" y="626.6" width="1.200" height="4.4"/><rect x="1125.0" y="625.4" width="1.200" height="5.6"/><rect x="1128.0" y="628.5" width="1.200" height="2.5"/><rect x="1130.0" y="629.5" width="1.200" height="1.5"/><rect x="1133.0" y="626.8" width="1.200" height="4.2"/><rect x="1138.0" y="622.0" width="1.200" height="9.0"/><rect x="1140.0" y="629.8" width="1.200" height="1.2"/><rect x="1143.0" y="628.6" width="1.200" height="2.4"/><rect x="1148.0" y="628.3" width="1.200" height="2.7"/><rect x="1155.0" y="627.0" width="1.200" height="4.0"/><rect x="1157.0" y="625.0" width="1.200" height="6.0"/><rect x="1164.0" y="626.1" width="1.200" height="4.9"/><rect x="1168.0" y="629.0" width="1.200" height="2.0"/><rect x="1175.0" y="629.3" width="1.200" height="1.7"/><rect x="1180.0" y="628.5" width="1.200" height="2.5"/><rect x="1187.0" y="628.8" width="1.200" height="2.2"/><rect x="1189.0" y="628.5" width="1.200" height="2.5"/><rect x="1193.0" y="630.4" width="1.200" height="0.6"/><rect x="1200.0" y="626.6" width="1.200" height="4.4"/><rect x="1202.0" y="626.2" width="1.200" height="4.8"/><rect x="1209.0" y="628.1" width="1.200" height="2.9"/><rect x="1214.0" y="623.4" width="1.200" height="7.6"/><rect x="1218.0" y="629.9" width="1.200" height="1.1"/><rect x="1220.0" y="628.8" width="1.200" height="2.2"/><rect x="1224.0" y="628.8" width="1.200" height="2.2"/><rect x="1231.0" y="630.0" width="1.200" height="1.0"/><rect x="1238.0" y="627.4" width="1.200" height="3.6"/><rect x="1242.0" y="629.1" width="1.200" height="1.9"/><rect x="1247.0" y="628.8" width="1.200" height="2.2"/><rect x="1252.0" y="624.7" width="1.200" height="6.3"/><rect x="1255.0" y="629.0" width="1.200" height="2.0"/><rect x="1260.0" y="623.8" width="1.200" height="7.2"/><rect x="1267.0" y="628.0" width="1.200" height="3.0"/><rect x="1270.0" y="630.0" width="1.200" height="1.0"/><rect x="1274.0" y="628.5" width="1.200" height="2.5"/><rect x="1276.0" y="630.1" width="1.200" height="0.9"/></svg>
<div class="a" style="left:69px;top:620px;font-family:'DejaVu Sans',sans-serif;font-size:12px;line-height:16px;color:#e6fffa;white-space:nowrap">Sunlight.mp3</div>
<svg class="a" style="left:0;top:418px" width="52" height="213" viewBox="0 418 52 213" fill="none" stroke="#c6cae2" stroke-width="1.600" stroke-linecap="round" stroke-linejoin="round"><path d="M28 422l.8 1.800M34 422l-.8 1.800" stroke="#8a90a8" stroke-width="1.300"/><path d="M25.300 502c1.800-2.800 3.800-3.800 6.100-3.800s4.300 1 6.100 3.800c-1.800 2.800-3.800 3.800-6.100 3.800s-4.300-1-6.100-3.800z"/><circle cx="31.400" cy="502" r="1.900" fill="#c6cae2" stroke="none"/><path d="M25.800 516.300h2.700l4-3v10l-4-3h-2.700z" fill="#c6cae2" stroke-width="1"/><path d="M35 514.800a4.800 4.800 0 0 1 0 7" stroke-width="1.700"/><g stroke="none" fill="#373d54"><rect x="1" y="501" width="2.500" height="3"/><rect x="1" y="505.500" width="2.500" height="3"/><rect x="1" y="510" width="2.500" height="3"/><rect x="1" y="514.500" width="2.500" height="3"/><rect x="13" y="501" width="2.500" height="3"/><rect x="13" y="505.500" width="2.500" height="3"/><rect x="13" y="510" width="2.500" height="3"/><rect x="13" y="514.500" width="2.500" height="3"/><rect x="5" y="501" width="6.500" height="7.300"/><rect x="5" y="510" width="6.500" height="7.500"/></g><path d="M25.800 597.800h2.700l4-3v10l-4-3h-2.700z" fill="#c6cae2" stroke-width="1"/><path d="M35 596.300a4.800 4.800 0 0 1 0 7" stroke-width="1.700"/><path d="M29.300 612.300h-.8a3.300 3.300 0 0 0 0 6.600h.8M33.700 612.300h.8a3.300 3.300 0 0 1 0 6.600h-.8M30 615.600h3" stroke-width="1.500"/><path d="M25.500 620l12.500-8.500" stroke="#d83a3a" stroke-width="1.200"/><g stroke="#5a6078" fill="#5a6078"><path d="M6.200 613v-11l8.500-2v11" fill="none" stroke-width="1.600"/><ellipse cx="4" cy="613.500" rx="2.600" ry="2"/><ellipse cx="12.500" cy="611.500" rx="2.600" ry="2"/></g></svg>
<div class="a" style="left:279.100px;top:410px;width:1.900px;height:221px;background:#e25c5a;opacity:.92"></div>
<svg class="a" style="left:273.500px;top:397px" width="13" height="19" viewBox="0 0 13 19"><path d="M.8 3a1.800 1.800 0 0 1 1.800-1.800h7.800a1.800 1.800 0 0 1 1.800 1.800v10.800l-5.700 4-5.700-4z" fill="#fb5c5c"/></svg>
<svg class="a" style="left:0;top:0" width="1280" height="631" viewBox="0 0 1280 631" fill="#dc0404"><polygon points="273.300,31.800 274.200,35.200 113.500,99.800 112.700,107.200 91.800,101.600 105.700,85.400 110,91"/><polygon points="386.300,586.800 384.200,589.600 312.300,551.300 304.100,555.900 296,537.400 318.600,536.200 317.700,544.400"/></svg>
</div></body></html>
